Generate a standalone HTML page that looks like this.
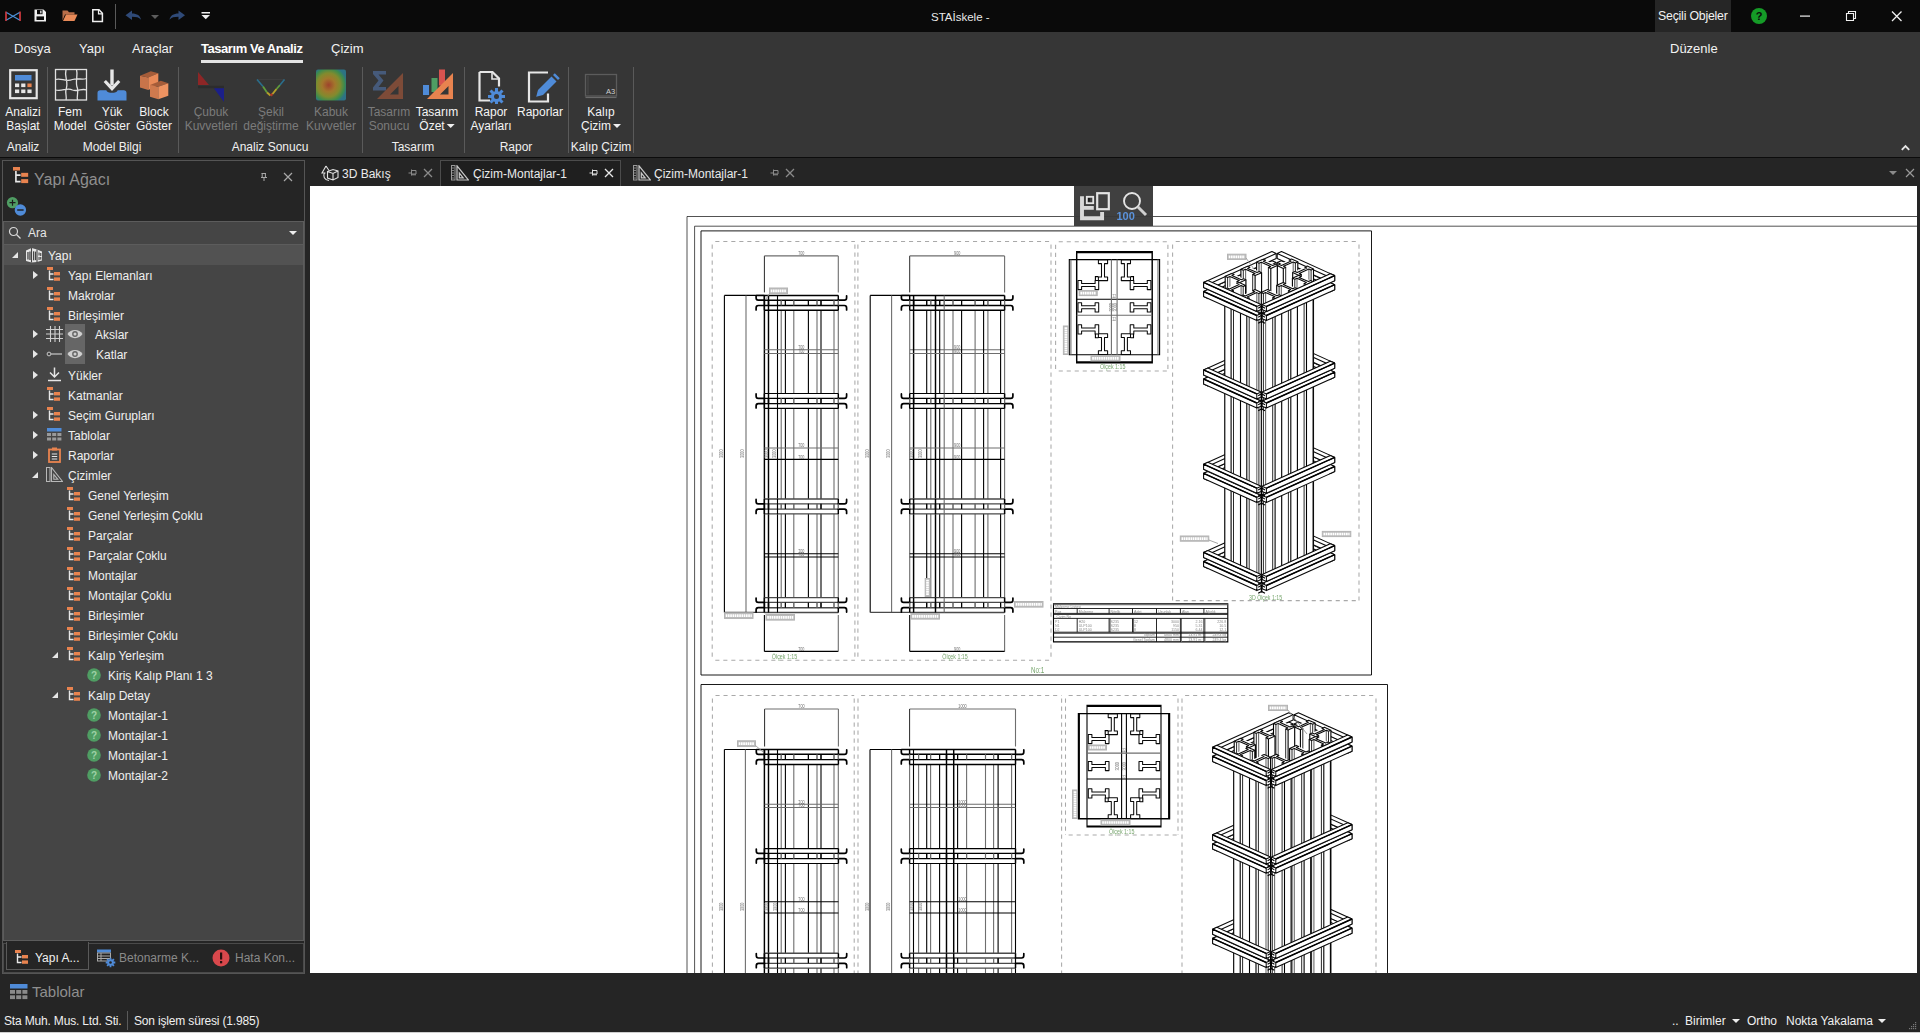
<!DOCTYPE html>
<html lang="tr">
<head>
<meta charset="utf-8">
<title>STAİskele</title>
<style>
*{box-sizing:border-box;margin:0;padding:0}
html,body{width:1920px;height:1033px;overflow:hidden;background:#252525;font-family:"Liberation Sans",sans-serif;font-size:12px;color:#f0f0f0}
.abs{position:absolute}
#titlebar{position:absolute;left:0;top:0;width:1920px;height:32px;background:#0a0a0a}
#ribbon{position:absolute;left:0;top:32px;width:1920px;height:125px;background:#363636}
#ribline{position:absolute;left:0;top:157px;width:1920px;height:1px;background:#0c0c0c}
.t{position:absolute;white-space:nowrap;line-height:14px}
.tab{position:absolute;top:41px;font-size:13px;line-height:15px;color:#f2f2f2;white-space:nowrap}
.rb{position:absolute;top:105px;text-align:center;font-size:12px;line-height:14px;color:#f4f4f4;white-space:nowrap;transform:translateX(-50%)}
.rb.dis{color:#7b7b7b}
.gl{position:absolute;top:140px;text-align:center;font-size:12px;line-height:14px;color:#f0f0f0;white-space:nowrap;transform:translateX(-50%)}
.sep{position:absolute;top:67px;width:1px;height:86px;background:#5a5a5a}
.ico{position:absolute}
#lpanel{position:absolute;left:2px;top:160px;width:303px;height:814px;border:1px solid #555;background:#252525}
#tree{position:absolute;left:3px;top:245px;width:301px;height:696px;background:#454545;border-left:1px solid #5c5c5c;border-right:1px solid #5c5c5c;border-bottom:1px solid #5c5c5c}
.tr{position:absolute;font-size:12px;line-height:14px;color:#f0f0f0;white-space:nowrap}
.arr{position:absolute;width:0;height:0}
.arr.c{border-left:5px solid #e6e6e6;border-top:4px solid transparent;border-bottom:4px solid transparent}
.arr.o{border-bottom:6px solid #e6e6e6;border-left:6px solid transparent}
#canvas{position:absolute;left:310px;top:186px;width:1607px;height:787px;background:#fff;overflow:hidden}
.dt{position:absolute;top:167px;font-size:12px;line-height:14px;color:#eaeaea;white-space:nowrap}
</style>
</head>
<body>
<div id="titlebar"></div><div id="ribbon"></div><div id="ribline"></div>
<svg class="ico" style="left:0;top:0" width="230" height="31" viewBox="0 0 230 31">
<path d="M6 11.5V21M20 11.5V21" stroke="#c8373b" stroke-width="1.8"/><path d="M6.5 12.5L19.5 20M6.5 20L19.5 12.5" stroke="#4c8fd6" stroke-width="1.3"/>
<path d="M34.5 9.5h9l2.5 2.5v9.5h-11.5z" fill="#f0f0f0"/><rect x="37" y="10" width="5.5" height="4.2" fill="#0a0a0a"/><rect x="40.2" y="10.6" width="1.3" height="2.8" fill="#f0f0f0"/><rect x="36.5" y="16.4" width="7.5" height="3.6" fill="#0a0a0a"/>
<path d="M62.5 10.5h5l1.5 1.8h5.5v2.2h-9.5l-2.5 6z" fill="#b96e49"/><path d="M66 14.5h11.5l-3 6.5h-11.5z" fill="#e98a58"/>
<path d="M92.8 9.8h6.2l3.4 3.4v8.3h-9.6z" fill="none" stroke="#f0f0f0" stroke-width="1.5"/><path d="M98.5 9.8v4h4" fill="none" stroke="#f0f0f0" stroke-width="1.2"/>
<rect x="115" y="4" width="1" height="25" fill="#5a5a5a"/>
<path d="M125.5 15.2l6.5-4.8v3c5 0 8.5 2.2 9 6.4c-2-2.4-4.6-3-9-3v3.2z" fill="#2f4a78"/>
<path d="M151 15h8l-4 4z" fill="#5c5c5c"/>
<path d="M185 15.2l-6.5-4.8v3c-5 0-8.500 2.200-9 6.400c2-2.400 4.600-3 9-3v3.200z" fill="#2f4a78"/>
<rect x="201.500" y="12" width="8.5" height="1.5" fill="#f0f0f0"/><path d="M201.500 15h8.500l-4.250 4.200z" fill="#f0f0f0"/>
</svg>
<div class="t" style="left:931px;top:10px;font-size:11.5px;color:#e8e8e8">STAİskele -</div>
<div class="abs" style="left:1655px;top:0;width:76px;height:32px;background:#262626"></div>
<div class="t" style="left:1658px;top:9px;font-size:12.3px;line-height:15px;letter-spacing:-0.2px;color:#f2f2f2">Seçili Objeler</div>
<svg class="ico" style="left:1740px;top:0" width="180" height="31" viewBox="0 0 180 31">
<circle cx="19" cy="16" r="8" fill="#159b27"/><text x="19" y="20" font-family="Liberation Sans" font-size="11" font-weight="bold" fill="#0a0a0a" text-anchor="middle">?</text>
<rect x="60" y="15.500" width="10" height="1.2" fill="#f0f0f0"/>
<path d="M106.500 13.500h7v7h-7z M108.500 13.500v-2h7v7h-2" fill="none" stroke="#f0f0f0" stroke-width="1.1"/>
<path d="M152 11.500l9.500 9.500M161.500 11.500l-9.500 9.500" stroke="#f0f0f0" stroke-width="1.3"/>
</svg>
<div class="tab" style="left:14px;">Dosya</div>
<div class="tab" style="left:79px;">Yapı</div>
<div class="tab" style="left:132px;">Araçlar</div>
<div class="tab" style="left:201px;font-weight:bold;letter-spacing:-0.45px;color:#fff;">Tasarım Ve Analiz</div>
<div class="tab" style="left:331px;">Çizim</div>
<div class="tab" style="left:1670px;">Düzenle</div>
<div class="abs" style="left:201px;top:60px;width:102px;height:3px;background:#e4e4e4"></div>
<div class="sep" style="left:47px"></div>
<div class="sep" style="left:178px"></div>
<div class="sep" style="left:362px"></div>
<div class="sep" style="left:464px"></div>
<div class="sep" style="left:568px"></div>
<div class="sep" style="left:633px"></div>
<div class="rb" style="left:23px">Analizi<br>Başlat</div>
<div class="rb" style="left:70px">Fem<br>Model</div>
<div class="rb" style="left:112px">Yük<br>Göster</div>
<div class="rb" style="left:154px">Block<br>Göster</div>
<div class="rb dis" style="left:211px">Çubuk<br>Kuvvetleri</div>
<div class="rb dis" style="left:271px">Şekil<br>değiştirme</div>
<div class="rb dis" style="left:331px">Kabuk<br>Kuvvetler</div>
<div class="rb dis" style="left:389px">Tasarım<br>Sonucu</div>
<div class="rb" style="left:437px">Tasarım<br>Özet<span style="display:inline-block;width:0;height:0;border-top:4px solid #f0f0f0;border-left:4px solid transparent;border-right:4px solid transparent;margin-left:2px;vertical-align:2px"></span></div>
<div class="rb" style="left:491px">Rapor<br>Ayarları</div>
<div class="rb" style="left:540px">Raporlar</div>
<div class="rb" style="left:601px">Kalıp<br>Çizim<span style="display:inline-block;width:0;height:0;border-top:4px solid #f0f0f0;border-left:4px solid transparent;border-right:4px solid transparent;margin-left:2px;vertical-align:2px"></span></div>
<div class="gl" style="left:23px">Analiz</div>
<div class="gl" style="left:112px">Model Bilgi</div>
<div class="gl" style="left:270px">Analiz Sonucu</div>
<div class="gl" style="left:413px">Tasarım</div>
<div class="gl" style="left:516px">Rapor</div>
<div class="gl" style="left:601px">Kalıp Çizim</div>
<svg class="ico" style="left:0;top:64px" width="640" height="40" viewBox="0 64 640 40">
<!-- analizi baslat -->
<rect x="10.200" y="70.200" width="26.500" height="28" fill="none" stroke="#e6e6e6" stroke-width="2.200"/>
<rect x="15" y="75" width="16.500" height="5.500" fill="#4f8bd8"/>
<g fill="#e6e6e6"><rect x="15" y="83.500" width="4.200" height="3.600"/><rect x="21.200" y="83.500" width="4.200" height="3.600"/><rect x="15" y="89.500" width="4.200" height="3.600"/><rect x="21.200" y="89.500" width="4.200" height="3.600"/><rect x="27.400" y="89.500" width="4.200" height="3.600"/></g><rect x="27.400" y="83.500" width="4.200" height="3.600" fill="#e8834f"/>
<!-- fem model -->
<g fill="none" stroke="#e0e0e0" stroke-width="1.300"><rect x="55.500" y="69.500" width="31" height="30.500"/><path d="M66 69.500c-2 8 3 12 0 20c-1 4 1 7 0 10.500M76.500 69.500c2 7-2 12 1 19c1 4-1 8 0 11.500M55.500 79.500c6-2 10 3 17 0c6-2 9 1 14-1M55.500 90c7 2 11-3 17 0c6 2 9-2 14 0"/></g>
<!-- yuk goster -->
<path d="M112 69.500v16" stroke="#e6e6e6" stroke-width="3.400" fill="none"/><path d="M104.800 81l7.200 7.600l7.200-7.600" stroke="#e6e6e6" stroke-width="3.200" fill="none"/>
<path d="M97.500 93c0-1.800 1-2.800 2.800-2.800h6c1 3.500 10.400 3.500 11.400 0h6c1.800 0 2.800 1 2.800 2.800v7.500h-29z" fill="#4f8bd8"/>
<!-- block goster -->
<path d="M140 75.800l8.300 1.700v12.500l-8.300-2.500z" fill="#c8744a"/><path d="M140 75.800l10.800-4.500l7.500 2l-10 4.200z" fill="#a55c39"/><path d="M148.300 77.500l10-4.200v11.700l-10 5z" fill="#e98a58"/>
<path d="M150 85l8.300 1.700v12.500l-8.300-2.500z" fill="#cf7a4e"/><path d="M150 85l10.800-4.200l7.500 2.500l-10 3.400z" fill="#a55c39"/><path d="M158.300 86.700l10-3.400v12.500l-10 3.400z" fill="#ee9361"/>
<!-- cubuk kuvvetleri -->
<path d="M198 72l11 13h-11z" fill="#8d2626"/><path d="M213 87h11v15z" fill="#1b1f8a"/><path d="M198 87h26" stroke="#2c2c2c" stroke-width="2.500"/>
<!-- sekil degistirme -->
<g transform="translate(0 -3.500)">
<path d="M257 83h28" stroke="#3e3e3e" stroke-width="1"/>
<path d="M257 83l6 7" stroke="#2a6e8c" stroke-width="1.600" fill="none"/><path d="M263 90l4 6" stroke="#5f9c3c" stroke-width="1.800"/><path d="M267 96l3.500 3" stroke="#b5a02a" stroke-width="2"/><path d="M270.500 99l2-1.500" stroke="#b03a26" stroke-width="2.200"/><path d="M272.500 97.500l4-5" stroke="#b5a02a" stroke-width="2"/><path d="M276.500 92.500l3.500-4" stroke="#5f9c3c" stroke-width="1.800"/><path d="M280 88.500l4.500-5.500" stroke="#2a6e8c" stroke-width="1.600"/></g>
<!-- kabuk kuvvetler -->
<defs><radialGradient id="kg" cx="0.42" cy="0.5" r="0.62"><stop offset="0" stop-color="#b1452a"/><stop offset="0.35" stop-color="#b5832a"/><stop offset="0.62" stop-color="#8f9a2c"/><stop offset="0.85" stop-color="#3e9a52"/><stop offset="1" stop-color="#2b7d93"/></radialGradient></defs>
<rect x="316" y="69.500" width="30" height="31" rx="2" fill="url(#kg)" opacity="0.85"/>
<!-- tasarim sonucu (dis) -->
<path d="M373 71h13v3.500h-7.500l5 6l-5 6.500h7.500v3.500h-13v-3l5.500-7l-5.500-6.500z" fill="#465a7a"/>
<path d="M403 73v26h-26z M398.500 86v8.500h-8.500z" fill="#7d4b38" fill-rule="evenodd"/>
<!-- tasarim ozet -->
<rect x="423" y="85" width="6" height="10" fill="#4f8bd8"/><rect x="431.500" y="78" width="6" height="14" fill="#4f9d63"/><rect x="439" y="69.500" width="6" height="16" fill="#d9534f"/>
<path d="M453 73v26h-26z M448.500 86v8.500h-8.500z" fill="#e8834f" fill-rule="evenodd"/>
<!-- rapor ayarlari -->
<path d="M479.500 72h13l6.500 6.500v8M490 100.500h-10.500z M479.500 72v28.500h9" fill="none" stroke="#e6e6e6" stroke-width="2.200"/><path d="M492 72v7h7" fill="none" stroke="#e6e6e6" stroke-width="1.600"/>
<g transform="translate(496.500 96.500)"><circle r="5.600" fill="#4f8bd8"/><g stroke="#4f8bd8" stroke-width="3"><path d="M0 -8.500V8.500M-8.500 0H8.500M-6 -6L6 6M-6 6L6 -6"/></g><circle r="2.500" fill="#363636"/></g>
<!-- raporlar -->
<path d="M548 72.500h-19v29h19v-8" fill="none" stroke="#e6e6e6" stroke-width="2.200"/>
<path d="M551.500 76.500l5 5l-13.500 13.500l-6.800 1.800l1.800-6.800z" fill="#4f8bd8"/><path d="M553 75l1.800-1.800l5 5l-1.800 1.800z" fill="#4f8bd8"/>
<!-- kalip cizim -->
<rect x="585.500" y="74.500" width="31" height="21.500" fill="none" stroke="#5c5c5c" stroke-width="1.300"/><path d="M585.500 97.500h31" stroke="#6a6a6a" stroke-width="1.200"/><path d="M588 76v18.500" stroke="#4a4a4a" stroke-width="1"/>
<text x="606" y="94" font-family="Liberation Sans" font-size="7.500" fill="#d0d0d0">A3</text>
</svg>
<svg class="ico" style="left:1898px;top:142px" width="14" height="10" viewBox="0 0 14 10"><path d="M3.800 7.800l3.700-3.700l3.700 3.700" stroke="#e6e6e6" stroke-width="1.900" fill="none"/></svg>
<div id="lpanel"></div>
<svg class="ico" style="left:13px;top:167px" width="17.500" height="18.700" viewBox="0 0 15 16"><rect x="0" y="0" width="6" height="3" fill="#e8834f"/><rect x="7" y="5" width="6" height="3.4" fill="#e8834f"/><rect x="7" y="10.4" width="6" height="3.4" fill="#e8834f"/><path d="M2.5 3.5V12.5H6.5M2.5 7H6.5" stroke="#e8e8e8" stroke-width="1.4" fill="none"/></svg>
<div class="t" style="left:34px;top:170.500px;font-size:16px;line-height:18px;color:#8f8f8f">Yapı Ağacı</div>
<svg class="ico" style="left:255px;top:168px" width="45" height="18" viewBox="0 0 45 18"><path d="M6.500 5.500h4.500M7.200 5.500v4h3.200v-4M6 9.500h6M9 9.500v3.500" stroke="#a8a8a8" stroke-width="1" fill="none"/><path d="M29 5l8 8M37 5l-8 8" stroke="#a8a8a8" stroke-width="1.200"/></svg>
<svg class="ico" style="left:6px;top:196px" width="22" height="22" viewBox="0 0 22 22"><circle cx="6.500" cy="6.700" r="5.600" fill="#4f9d63"/><path d="M3.500 6.700h6M6.500 3.700v6" stroke="#1c1c1c" stroke-width="1.200"/><circle cx="14.400" cy="14" r="5.700" fill="#4f8bd8"/><path d="M11.200 14h6.400" stroke="#1c1c1c" stroke-width="1.400"/></svg>
<div class="abs" style="left:3px;top:221px;width:301px;height:24px;background:#454545;border:1px solid #5c5c5c"></div>
<svg class="ico" style="left:8px;top:226px" width="14" height="14" viewBox="0 0 14 14"><circle cx="5.500" cy="5.500" r="4" stroke="#d8d8d8" stroke-width="1.200" fill="none"/><path d="M8.500 8.500l4 4" stroke="#d8d8d8" stroke-width="1.300"/></svg>
<div class="t" style="left:28px;top:226px;font-size:12px;color:#e6e6e6">Ara</div>
<div class="abs" style="left:289px;top:231px;width:0;height:0;border-top:4px solid #eee;border-left:4px solid transparent;border-right:4px solid transparent"></div>
<div id="tree"></div>
<div class="abs" style="left:4px;top:245px;width:299px;height:20px;background:#525252"></div>
<div class="arr o" style="left:12px;top:252px"></div>
<svg class="ico" style="left:25px;top:247px" width="18" height="16" viewBox="0 0 18 16"><path d="M1 3.500l5.500-2.500l5.500 1.500l5 2v9l-5 1.500l-5.500 0.500l-5.500-1.500z" fill="#e6e6e6"/><g stroke="#454545" stroke-width="1.100"><path d="M6.500 1v14.500M12 2.500v13"/></g><g fill="#454545"><rect x="2.300" y="5" width="1.300" height="7.500"/><rect x="4.300" y="4.500" width="1.300" height="8.500"/><rect x="8" y="4.300" width="1.200" height="9"/><rect x="9.900" y="4.600" width="1.200" height="8.500"/><rect x="13.500" y="5.500" width="1.100" height="3"/><rect x="15.200" y="6" width="1.100" height="3"/><rect x="13.500" y="10" width="1.100" height="3"/><rect x="15.200" y="10" width="1.100" height="2.600"/></g></svg>
<div class="tr" style="left:48px;top:249px">Yapı</div>
<div class="arr c" style="left:33px;top:271px"></div>
<svg class="ico" style="left:47px;top:267px" width="15" height="16" viewBox="0 0 15 16"><rect x="0" y="0" width="6" height="3" fill="#e8834f"/><rect x="7" y="5" width="6" height="3.4" fill="#e8834f"/><rect x="7" y="10.4" width="6" height="3.4" fill="#e8834f"/><path d="M2.5 3.5V12.5H6.5M2.5 7H6.5" stroke="#e8e8e8" stroke-width="1.4" fill="none"/></svg>
<div class="tr" style="left:68px;top:269px">Yapı Elemanları</div>
<svg class="ico" style="left:47px;top:287px" width="15" height="16" viewBox="0 0 15 16"><rect x="0" y="0" width="6" height="3" fill="#e8834f"/><rect x="7" y="5" width="6" height="3.4" fill="#e8834f"/><rect x="7" y="10.4" width="6" height="3.4" fill="#e8834f"/><path d="M2.5 3.5V12.5H6.5M2.5 7H6.5" stroke="#e8e8e8" stroke-width="1.4" fill="none"/></svg>
<div class="tr" style="left:68px;top:289px">Makrolar</div>
<svg class="ico" style="left:47px;top:307px" width="15" height="16" viewBox="0 0 15 16"><rect x="0" y="0" width="6" height="3" fill="#e8834f"/><rect x="7" y="5" width="6" height="3.4" fill="#e8834f"/><rect x="7" y="10.4" width="6" height="3.4" fill="#e8834f"/><path d="M2.5 3.5V12.5H6.5M2.5 7H6.5" stroke="#e8e8e8" stroke-width="1.4" fill="none"/></svg>
<div class="tr" style="left:68px;top:309px">Birleşimler</div>
<div class="arr c" style="left:33px;top:330px"></div>
<svg class="ico" style="left:46px;top:326px" width="17" height="16" viewBox="0 0 17 16"><path d="M4.500 0v16M9 0v16M13.500 0v16M0 3.500h17M0 8h17M0 12.500h17" stroke="#d0d0d0" stroke-width="1.100"/></svg>
<div class="abs" style="left:65px;top:324px;width:20px;height:20px;background:#666"></div>
<svg class="ico" style="left:67px;top:329px" width="16" height="10" viewBox="0 0 16 10"><path d="M0.500 5c3-5.500 12-5.500 15 0c-3 5.500-12 5.500-15 0z" fill="#cfcfcf"/><circle cx="8" cy="5" r="2.900" fill="#666"/><circle cx="8" cy="5" r="1.500" fill="#cfcfcf"/></svg>
<div class="tr" style="left:95px;top:328px">Akslar</div>
<div class="arr c" style="left:33px;top:350px"></div>
<svg class="ico" style="left:46px;top:350px" width="17" height="8" viewBox="0 0 17 8"><circle cx="3" cy="4" r="1.900" stroke="#c8c8c8" stroke-width="1" fill="none"/><path d="M5 4h11" stroke="#c8c8c8" stroke-width="1.200"/></svg>
<div class="abs" style="left:65px;top:344px;width:20px;height:20px;background:#666"></div>
<svg class="ico" style="left:67px;top:349px" width="16" height="10" viewBox="0 0 16 10"><path d="M0.500 5c3-5.500 12-5.500 15 0c-3 5.500-12 5.500-15 0z" fill="#cfcfcf"/><circle cx="8" cy="5" r="2.900" fill="#666"/><circle cx="8" cy="5" r="1.500" fill="#cfcfcf"/></svg>
<div class="tr" style="left:96px;top:348px">Katlar</div>
<div class="arr c" style="left:33px;top:371px"></div>
<svg class="ico" style="left:47px;top:367px" width="15" height="15" viewBox="0 0 15 15"><path d="M7.500 0.500v9M3 5.500l4.500 4.500l4.500-4.500M1 13.500h13" stroke="#e6e6e6" stroke-width="1.500" fill="none"/></svg>
<div class="tr" style="left:68px;top:369px">Yükler</div>
<svg class="ico" style="left:47px;top:387px" width="15" height="16" viewBox="0 0 15 16"><rect x="0" y="0" width="6" height="3" fill="#e8834f"/><rect x="7" y="5" width="6" height="3.4" fill="#e8834f"/><rect x="7" y="10.4" width="6" height="3.4" fill="#e8834f"/><path d="M2.5 3.5V12.5H6.5M2.5 7H6.5" stroke="#e8e8e8" stroke-width="1.4" fill="none"/></svg>
<div class="tr" style="left:68px;top:389px">Katmanlar</div>
<div class="arr c" style="left:33px;top:411px"></div>
<svg class="ico" style="left:47px;top:407px" width="15" height="16" viewBox="0 0 15 16"><rect x="0" y="0" width="6" height="3" fill="#e8834f"/><rect x="7" y="5" width="6" height="3.4" fill="#e8834f"/><rect x="7" y="10.4" width="6" height="3.4" fill="#e8834f"/><path d="M2.5 3.5V12.5H6.5M2.5 7H6.5" stroke="#e8e8e8" stroke-width="1.4" fill="none"/></svg>
<div class="tr" style="left:68px;top:409px">Seçim Gurupları</div>
<div class="arr c" style="left:33px;top:431px"></div>
<svg class="ico" style="left:47px;top:428px" width="15" height="13" viewBox="0 0 15 13"><rect x="0" y="0" width="14.500" height="3.500" fill="#4f8bd8"/><g fill="#9a9a9a"><rect x="0" y="5" width="4" height="3"/><rect x="5.200" y="5" width="4" height="3"/><rect x="10.400" y="5" width="4" height="3"/><rect x="0" y="9.500" width="4" height="3"/><rect x="5.200" y="9.500" width="4" height="3"/><rect x="10.400" y="9.500" width="4" height="3"/></g></svg>
<div class="tr" style="left:68px;top:429px">Tablolar</div>
<div class="arr c" style="left:33px;top:451px"></div>
<svg class="ico" style="left:48px;top:447px" width="13" height="16" viewBox="0 0 13 16"><rect x="1" y="2.500" width="11" height="12.500" fill="none" stroke="#e8834f" stroke-width="1.800"/><rect x="4" y="0.500" width="5" height="3" fill="#e8834f"/><path d="M3.800 7h5.400M3.800 9.500h5.400M3.800 12h5.400" stroke="#e6e6e6" stroke-width="1.100"/></svg>
<div class="tr" style="left:68px;top:449px">Raporlar</div>
<div class="arr o" style="left:32px;top:472px"></div>
<svg class="ico" style="left:46px;top:467px" width="17" height="15" viewBox="0 0 17 15"><rect x="0.500" y="0.500" width="3.500" height="14" fill="none" stroke="#b8b8b8" stroke-width="1"/><path d="M5.500 0.500v14h11z M7.800 7.500v4.800h4z" fill="none" stroke="#b8b8b8" stroke-width="1.100"/></svg>
<div class="tr" style="left:68px;top:469px">Çizimler</div>
<svg class="ico" style="left:67px;top:487px" width="15" height="16" viewBox="0 0 15 16"><rect x="0" y="0" width="6" height="3" fill="#e8834f"/><rect x="7" y="5" width="6" height="3.4" fill="#e8834f"/><rect x="7" y="10.4" width="6" height="3.4" fill="#e8834f"/><path d="M2.5 3.5V12.5H6.5M2.5 7H6.5" stroke="#e8e8e8" stroke-width="1.4" fill="none"/></svg>
<div class="tr" style="left:88px;top:489px">Genel Yerleşim</div>
<svg class="ico" style="left:67px;top:507px" width="15" height="16" viewBox="0 0 15 16"><rect x="0" y="0" width="6" height="3" fill="#e8834f"/><rect x="7" y="5" width="6" height="3.4" fill="#e8834f"/><rect x="7" y="10.4" width="6" height="3.4" fill="#e8834f"/><path d="M2.5 3.5V12.5H6.5M2.5 7H6.5" stroke="#e8e8e8" stroke-width="1.4" fill="none"/></svg>
<div class="tr" style="left:88px;top:509px">Genel Yerleşim Çoklu</div>
<svg class="ico" style="left:67px;top:527px" width="15" height="16" viewBox="0 0 15 16"><rect x="0" y="0" width="6" height="3" fill="#e8834f"/><rect x="7" y="5" width="6" height="3.4" fill="#e8834f"/><rect x="7" y="10.4" width="6" height="3.4" fill="#e8834f"/><path d="M2.5 3.5V12.5H6.5M2.5 7H6.5" stroke="#e8e8e8" stroke-width="1.4" fill="none"/></svg>
<div class="tr" style="left:88px;top:529px">Parçalar</div>
<svg class="ico" style="left:67px;top:547px" width="15" height="16" viewBox="0 0 15 16"><rect x="0" y="0" width="6" height="3" fill="#e8834f"/><rect x="7" y="5" width="6" height="3.4" fill="#e8834f"/><rect x="7" y="10.4" width="6" height="3.4" fill="#e8834f"/><path d="M2.5 3.5V12.5H6.5M2.5 7H6.5" stroke="#e8e8e8" stroke-width="1.4" fill="none"/></svg>
<div class="tr" style="left:88px;top:549px">Parçalar Çoklu</div>
<svg class="ico" style="left:67px;top:567px" width="15" height="16" viewBox="0 0 15 16"><rect x="0" y="0" width="6" height="3" fill="#e8834f"/><rect x="7" y="5" width="6" height="3.4" fill="#e8834f"/><rect x="7" y="10.4" width="6" height="3.4" fill="#e8834f"/><path d="M2.5 3.5V12.5H6.5M2.5 7H6.5" stroke="#e8e8e8" stroke-width="1.4" fill="none"/></svg>
<div class="tr" style="left:88px;top:569px">Montajlar</div>
<svg class="ico" style="left:67px;top:587px" width="15" height="16" viewBox="0 0 15 16"><rect x="0" y="0" width="6" height="3" fill="#e8834f"/><rect x="7" y="5" width="6" height="3.4" fill="#e8834f"/><rect x="7" y="10.4" width="6" height="3.4" fill="#e8834f"/><path d="M2.5 3.5V12.5H6.5M2.5 7H6.5" stroke="#e8e8e8" stroke-width="1.4" fill="none"/></svg>
<div class="tr" style="left:88px;top:589px">Montajlar Çoklu</div>
<svg class="ico" style="left:67px;top:607px" width="15" height="16" viewBox="0 0 15 16"><rect x="0" y="0" width="6" height="3" fill="#e8834f"/><rect x="7" y="5" width="6" height="3.4" fill="#e8834f"/><rect x="7" y="10.4" width="6" height="3.4" fill="#e8834f"/><path d="M2.5 3.5V12.5H6.5M2.5 7H6.5" stroke="#e8e8e8" stroke-width="1.4" fill="none"/></svg>
<div class="tr" style="left:88px;top:609px">Birleşimler</div>
<svg class="ico" style="left:67px;top:627px" width="15" height="16" viewBox="0 0 15 16"><rect x="0" y="0" width="6" height="3" fill="#e8834f"/><rect x="7" y="5" width="6" height="3.4" fill="#e8834f"/><rect x="7" y="10.4" width="6" height="3.4" fill="#e8834f"/><path d="M2.5 3.5V12.5H6.5M2.5 7H6.5" stroke="#e8e8e8" stroke-width="1.4" fill="none"/></svg>
<div class="tr" style="left:88px;top:629px">Birleşimler Çoklu</div>
<div class="arr o" style="left:52px;top:652px"></div>
<svg class="ico" style="left:67px;top:647px" width="15" height="16" viewBox="0 0 15 16"><rect x="0" y="0" width="6" height="3" fill="#e8834f"/><rect x="7" y="5" width="6" height="3.4" fill="#e8834f"/><rect x="7" y="10.4" width="6" height="3.4" fill="#e8834f"/><path d="M2.5 3.5V12.5H6.5M2.5 7H6.5" stroke="#e8e8e8" stroke-width="1.4" fill="none"/></svg>
<div class="tr" style="left:88px;top:649px">Kalıp Yerleşim</div>
<svg class="ico" style="left:87px;top:668px" width="14" height="14" viewBox="0 0 14 14"><circle cx="7" cy="7" r="6.8" fill="#4f9d63"/><text x="7" y="10.6" font-family="Liberation Sans" font-size="10" font-weight="bold" fill="#9ed0a6" text-anchor="middle">?</text></svg>
<div class="tr" style="left:108px;top:669px">Kiriş Kalıp Planı 1 3</div>
<div class="arr o" style="left:52px;top:692px"></div>
<svg class="ico" style="left:67px;top:687px" width="15" height="16" viewBox="0 0 15 16"><rect x="0" y="0" width="6" height="3" fill="#e8834f"/><rect x="7" y="5" width="6" height="3.4" fill="#e8834f"/><rect x="7" y="10.4" width="6" height="3.4" fill="#e8834f"/><path d="M2.5 3.5V12.5H6.5M2.5 7H6.5" stroke="#e8e8e8" stroke-width="1.4" fill="none"/></svg>
<div class="tr" style="left:88px;top:689px">Kalıp Detay</div>
<svg class="ico" style="left:87px;top:708px" width="14" height="14" viewBox="0 0 14 14"><circle cx="7" cy="7" r="6.8" fill="#4f9d63"/><text x="7" y="10.6" font-family="Liberation Sans" font-size="10" font-weight="bold" fill="#9ed0a6" text-anchor="middle">?</text></svg>
<div class="tr" style="left:108px;top:709px">Montajlar-1</div>
<svg class="ico" style="left:87px;top:728px" width="14" height="14" viewBox="0 0 14 14"><circle cx="7" cy="7" r="6.8" fill="#4f9d63"/><text x="7" y="10.6" font-family="Liberation Sans" font-size="10" font-weight="bold" fill="#9ed0a6" text-anchor="middle">?</text></svg>
<div class="tr" style="left:108px;top:729px">Montajlar-1</div>
<svg class="ico" style="left:87px;top:748px" width="14" height="14" viewBox="0 0 14 14"><circle cx="7" cy="7" r="6.8" fill="#4f9d63"/><text x="7" y="10.6" font-family="Liberation Sans" font-size="10" font-weight="bold" fill="#9ed0a6" text-anchor="middle">?</text></svg>
<div class="tr" style="left:108px;top:749px">Montajlar-1</div>
<svg class="ico" style="left:87px;top:768px" width="14" height="14" viewBox="0 0 14 14"><circle cx="7" cy="7" r="6.8" fill="#4f9d63"/><text x="7" y="10.6" font-family="Liberation Sans" font-size="10" font-weight="bold" fill="#9ed0a6" text-anchor="middle">?</text></svg>
<div class="tr" style="left:108px;top:769px">Montajlar-2</div>
<div class="abs" style="left:3px;top:943px;width:301px;height:30px;border:1px solid #4a4a4a;background:#252525"></div>
<div class="abs" style="left:6px;top:942px;width:83px;height:28px;border:1px solid #5a5a5a;border-top:none;background:#252525"></div>
<svg class="ico" style="left:15px;top:950px" width="15" height="16" viewBox="0 0 15 16"><rect x="0" y="0" width="6" height="3" fill="#e8834f"/><rect x="7" y="5" width="6" height="3.4" fill="#e8834f"/><rect x="7" y="10.4" width="6" height="3.4" fill="#e8834f"/><path d="M2.5 3.5V12.5H6.5M2.5 7H6.5" stroke="#e8e8e8" stroke-width="1.4" fill="none"/></svg>
<div class="t" style="left:35px;top:951px;font-size:12px;color:#f0f0f0">Yapı A...</div>
<svg class="ico" style="left:96px;top:948px" width="20" height="20" viewBox="0 0 20 20"><rect x="1" y="1.500" width="14" height="3" fill="#4f8bd8"/><g stroke="#a8a8a8" stroke-width="1" fill="none"><rect x="1.500" y="5" width="13" height="8"/><path d="M1.500 8h13M1.500 10.500h13M5 5v8"/></g><g transform="translate(14.500 14.500)"><circle r="3.200" fill="#4f8bd8"/><g stroke="#4f8bd8" stroke-width="1.800"><path d="M0 -4.800V4.800M-4.800 0H4.800M-3.400 -3.400L3.400 3.400M-3.400 3.400L3.400 -3.400"/></g><circle r="1.300" fill="#252525"/></g></svg>
<div class="t" style="left:119px;top:951px;font-size:12px;color:#8a8a8a">Betonarme K...</div>
<svg class="ico" style="left:212px;top:949px" width="18" height="18" viewBox="0 0 18 18"><circle cx="9" cy="9" r="8.500" fill="#d9484c"/><rect x="8" y="3.500" width="2.200" height="7" fill="#2a1010"/><rect x="8" y="12" width="2.200" height="2.300" fill="#2a1010"/></svg>
<div class="t" style="left:235px;top:951px;font-size:12px;color:#8a8a8a">Hata Kon...</div>
<div class="abs" style="left:440px;top:160px;width:181px;height:26px;border:1px solid #4c4c4c;border-bottom:none;background:#1f1f1f"></div>
<svg class="ico" style="left:320px;top:163px" width="20" height="20" viewBox="0 0 20 20"><g fill="none" stroke="#e0e0e0" stroke-width="1.100"><path d="M6 3l-4 7h3.500M6 3l3 4.500"/><path d="M7.500 8.500l5.500-2l5 1.500v6.500l-5 2.500l-5.500-2z M7.500 8.500l5.500 2l5-2.500M13 10.500v6.500"/><path d="M4.500 10c-2 3 0 7 4.500 7.500"/></g></svg>
<div class="dt" style="left:342px">3D Bakış</div>
<svg class="ico" style="left:408px;top:166px" width="30" height="14" viewBox="0 0 30 14"><path d="M0.500 7h3M3.500 3.500v6M3.500 4.500h4.500v3.500h-4.500M3.500 8.800h4.500" stroke="#8a8a8a" stroke-width="1" fill="none"/><path d="M16 3l8 8M24 3l-8 8" stroke="#8a8a8a" stroke-width="1.300"/></svg>
<svg class="ico" style="left:451px;top:165px" width="18" height="16" viewBox="0 0 18 16"><rect x="0.500" y="0.500" width="3.500" height="14.500" fill="none" stroke="#9a9a9a" stroke-width="1"/><path d="M1 3h2M1 5.500h2M1 8h2M1 10.500h2M1 13h2" stroke="#9a9a9a" stroke-width="0.800"/><path d="M6 0.800v14.200h11.500z M8.300 8v4.800h3.900z" fill="none" stroke="#c8c8c8" stroke-width="1.200"/></svg>
<div class="dt" style="left:473px">Çizim-Montajlar-1</div>
<svg class="ico" style="left:589px;top:166px" width="30" height="14" viewBox="0 0 30 14"><path d="M0.500 7h3M3.500 3.500v6M3.500 4.500h4.500v3.500h-4.500M3.500 8.800h4.500" stroke="#e0e0e0" stroke-width="1" fill="none"/><path d="M16 3l8 8M24 3l-8 8" stroke="#e8e8e8" stroke-width="1.300"/></svg>
<svg class="ico" style="left:633px;top:165px" width="18" height="16" viewBox="0 0 18 16"><rect x="0.500" y="0.500" width="3.500" height="14.500" fill="none" stroke="#9a9a9a" stroke-width="1"/><path d="M1 3h2M1 5.500h2M1 8h2M1 10.500h2M1 13h2" stroke="#9a9a9a" stroke-width="0.800"/><path d="M6 0.800v14.200h11.500z M8.300 8v4.800h3.900z" fill="none" stroke="#c8c8c8" stroke-width="1.200"/></svg>
<div class="dt" style="left:654px">Çizim-Montajlar-1</div>
<svg class="ico" style="left:770px;top:166px" width="30" height="14" viewBox="0 0 30 14"><path d="M0.500 7h3M3.500 3.500v6M3.500 4.500h4.500v3.500h-4.500M3.500 8.800h4.500" stroke="#8a8a8a" stroke-width="1" fill="none"/><path d="M16 3l8 8M24 3l-8 8" stroke="#8a8a8a" stroke-width="1.300"/></svg>
<div class="abs" style="left:1889px;top:171px;width:0;height:0;border-top:4px solid #8a8a8a;border-left:4px solid transparent;border-right:4px solid transparent"></div>
<svg class="ico" style="left:1905px;top:168px" width="10" height="10" viewBox="0 0 10 10"><path d="M1 1l8 8M9 1l-8 8" stroke="#9a9a9a" stroke-width="1.200"/></svg>
<svg class="ico" style="left:10px;top:984px" width="18" height="16" viewBox="0 0 18 16"><rect x="0" y="0" width="17.500" height="4.500" fill="#4f8bd8"/><g fill="#8a8a8a"><rect x="0" y="6" width="5" height="3.800"/><rect x="6.200" y="6" width="5" height="3.800"/><rect x="12.400" y="6" width="5" height="3.800"/><rect x="0" y="11.300" width="5" height="3.800"/><rect x="6.200" y="11.300" width="5" height="3.800"/><rect x="12.400" y="11.300" width="5" height="3.800"/></g></svg>
<div class="t" style="left:32px;top:983px;font-size:15px;line-height:18px;color:#8f8f8f">Tablolar</div>
<div class="t" style="left:4px;top:1014px;font-size:12px;letter-spacing:-0.17px;color:#f0f0f0">Sta Muh. Mus. Ltd. Sti.</div>
<div class="abs" style="left:127px;top:1011px;width:1px;height:19px;background:#5a5a5a"></div>
<div class="t" style="left:134px;top:1014px;font-size:12px;letter-spacing:-0.17px;color:#f0f0f0">Son işlem süresi (1.985)</div>
<div class="t" style="left:1672px;top:1014px;font-size:12px;color:#f0f0f0">..</div>
<div class="t" style="left:1685px;top:1014px;font-size:12px;color:#f0f0f0">Birimler</div>
<div class="abs" style="left:1732px;top:1019px;width:0;height:0;border-top:4px solid #eee;border-left:4px solid transparent;border-right:4px solid transparent"></div>
<div class="t" style="left:1747px;top:1014px;font-size:12px;color:#f0f0f0">Ortho</div>
<div class="t" style="left:1786px;top:1014px;font-size:12px;color:#f0f0f0">Nokta Yakalama</div>
<div class="abs" style="left:1878px;top:1019px;width:0;height:0;border-top:4px solid #eee;border-left:4px solid transparent;border-right:4px solid transparent"></div>
<svg class="ico" style="left:1908px;top:1021px" width="10" height="10" viewBox="0 0 10 10"><g fill="#7a7a7a"><rect x="7" y="1" width="1.200" height="1.200"/><rect x="5" y="3" width="1.200" height="1.200"/><rect x="7" y="3" width="1.200" height="1.200"/><rect x="3" y="5" width="1.200" height="1.200"/><rect x="5" y="5" width="1.200" height="1.200"/><rect x="7" y="5" width="1.200" height="1.200"/><rect x="1" y="7" width="1.200" height="1.200"/><rect x="3" y="7" width="1.200" height="1.200"/><rect x="5" y="7" width="1.200" height="1.200"/><rect x="7" y="7" width="1.200" height="1.200"/></g></svg>
<div class="abs" style="left:0;top:1032px;width:1920px;height:1px;background:#cfcfcf"></div>
<div id="canvas">
<svg width="1607" height="787" viewBox="310 186 1607 787" style="position:absolute;left:0;top:0;will-change:transform" shape-rendering="auto"><style>
.k{stroke:#000;stroke-width:1.1;fill:none}
.kk{stroke:#000;stroke-width:1.45;fill:none}
.kb{stroke:#000;stroke-width:1.2;fill:none}
.kg{stroke:#4a4a4a;stroke-width:1.35;fill:none}
.hk{stroke:#000;stroke-width:1.7;fill:none;stroke-linecap:round;stroke-linejoin:round}
.k1{stroke:#111;stroke-width:0.9;fill:none}
.gr{stroke:#6e6e6e;stroke-width:1.1;fill:none}
.gy{stroke:#9a9a9a;stroke-width:0.9;fill:none}
.fr{stroke:#000;stroke-width:0.68;fill:none;stroke-linejoin:round}
.sh{stroke:#000;stroke-width:0.9;fill:none;stroke-linejoin:round}
.da{stroke:#a9a9a9;stroke-width:1.05;fill:none;stroke-dasharray:4.1 3.9;stroke-dashoffset:4.9}
.w{stroke:#0a0a0a;stroke-width:1.05;fill:#fff;stroke-linejoin:round}
.wf{stroke:none;fill:#fff}
.lb{stroke:#b4b4b4;stroke-width:1;fill:#bcbcbc}
.lt{stroke:#fff;stroke-width:2.7;fill:none;stroke-dasharray:1.7 0.55}
text{font-family:"Liberation Sans",sans-serif}
.gt{fill:#78a66e;font-size:7.5px}
.dm{fill:#707070;font-size:5.6px}
</style><path class="fr" d="M687.0 980.0L687.0 216.5L1925.0 216.5M694.6 980.0L694.6 226.2L1925.0 226.2"/>
<path class="sh" d="M701.0 230.9L1371.5 230.9L1371.5 675.0L701.0 675.0zM701.0 980.0L701.0 684.5L1387.5 684.5L1387.5 980.0"/>
<path class="da" d="M712.2 241.5L854.9 241.5M712.2 241.5L712.2 660.3M854.9 241.5L854.9 660.3M712.2 660.3L854.9 660.3M857.9 241.5L1051.0 241.5M857.9 241.5L857.9 660.3M1051.0 241.5L1051.0 660.3M857.9 660.3L1051.0 660.3M1055.6 241.7L1167.9 241.7M1055.6 241.7L1055.6 370.9M1167.9 241.7L1167.9 370.9M1055.6 370.9L1167.9 370.9M1172.6 241.5L1359.0 241.5M1172.6 241.5L1172.6 600.6M1359.0 241.5L1359.0 600.6M1172.6 600.6L1359.0 600.6M712.4 695.5L854.2 695.5M712.4 695.5L712.4 990.0M854.2 695.5L854.2 990.0M712.4 990.0L854.2 990.0M858.0 695.5L1061.6 695.5M858.0 695.5L858.0 990.0M1061.6 695.5L1061.6 990.0M858.0 990.0L1061.6 990.0M1065.5 695.5L1178.0 695.5M1065.5 695.5L1065.5 835.0M1178.0 695.5L1178.0 835.0M1065.5 835.0L1178.0 835.0M1182.0 695.5L1376.0 695.5M1182.0 695.5L1182.0 990.0M1376.0 695.5L1376.0 990.0M1182.0 990.0L1376.0 990.0"/>
<path class="k1" d="M764.4 255.9L764.4 292.4"/>
<path class="gr" d="M764.4 255.9L838.3 255.9M838.3 255.9L838.3 292.4"/>
<text class="dm" x="801.3" y="255.1" text-anchor="middle" textLength="6.3" lengthAdjust="spacingAndGlyphs">700</text>
<path class="kk" d="M764.4 295.4L764.4 612.4M768.5 295.4L768.5 612.4"/>
<path class="k" d="M777.5 295.4L777.5 612.4M785.4 295.4L785.4 612.4M808.4 295.4L808.4 612.4M821.0 295.4L821.0 612.4"/>
<path class="gr" d="M781.2 295.4L781.2 612.4M793.8 295.4L793.8 612.4M817.0 295.4L817.0 612.4M834.0 295.4L834.0 612.4M838.3 295.4L838.3 612.4M764.4 349.7L838.3 349.7"/>
<text class="dm" x="801.3" y="349.1" text-anchor="middle" textLength="6.3" lengthAdjust="spacingAndGlyphs">700</text>
<path class="gr" d="M764.4 353.5L838.3 353.5"/>
<text class="dm" x="801.3" y="352.9" text-anchor="middle" textLength="6.3" lengthAdjust="spacingAndGlyphs">700</text>
<path class="gr" d="M764.4 448.0L838.3 448.0"/>
<text class="dm" x="801.3" y="447.4" text-anchor="middle" textLength="6.3" lengthAdjust="spacingAndGlyphs">700</text>
<path class="k" d="M764.4 459.4L838.3 459.4"/>
<text class="dm" x="801.3" y="458.8" text-anchor="middle" textLength="6.3" lengthAdjust="spacingAndGlyphs">700</text>
<path class="k" d="M764.4 553.7L838.3 553.7"/>
<text class="dm" x="801.3" y="553.1" text-anchor="middle" textLength="6.3" lengthAdjust="spacingAndGlyphs">700</text>
<path class="k" d="M764.4 557.0L838.3 557.0"/>
<text class="dm" x="801.3" y="556.4" text-anchor="middle" textLength="6.3" lengthAdjust="spacingAndGlyphs">700</text>
<path class="k" d="M724.4 295.4L724.4 612.4M724.4 295.4L764.4 295.4"/>
<path class="gr" d="M746.0 295.4L746.0 612.4"/>
<path class="kg" d="M724.4 612.4L764.4 612.4"/>
<text class="dm" x="722.9" y="457.9" text-anchor="start" transform="rotate(-90 722.9 457.9)" textLength="8.4" lengthAdjust="spacingAndGlyphs">3000</text>
<text class="dm" x="744.5" y="457.9" text-anchor="start" transform="rotate(-90 744.5 457.9)" textLength="8.4" lengthAdjust="spacingAndGlyphs">3000</text>
<text class="dm" x="767.9" y="457.9" text-anchor="start" transform="rotate(-90 767.9 457.9)" textLength="8.4" lengthAdjust="spacingAndGlyphs">3000</text>
<text class="dm" x="776.4" y="457.9" text-anchor="start" transform="rotate(-90 776.4 457.9)" textLength="8.4" lengthAdjust="spacingAndGlyphs">3000</text>
<rect class="wf" x="764.4" y="295.4" width="73.89999999999998" height="4.8"/><rect class="wf" x="764.4" y="305.5" width="73.89999999999998" height="4.8"/>
<path class="kk" d="M764.4 295.4L838.3 295.4M764.4 300.2L838.3 300.2M764.4 305.5L838.3 305.5M764.4 310.3L838.3 310.3M764.4 295.4L764.4 300.2M764.4 305.5L764.4 310.3M838.3 295.4L838.3 300.2M838.3 305.5L838.3 310.3M756.1 295.4L764.4 295.4M764.4 295.4L764.4 310.3M768.5 295.4L768.5 310.3"/>
<path class="hk" d="M764.4 300.2H758.3Q756.1 300.2 756.1 297.8V295.8M764.4 305.5H758.3Q756.1 305.5 756.1 307.9V309.9M838.3 300.2H844.4Q846.6 300.2 846.6 297.8V295.8M838.3 305.5H844.4Q846.6 305.5 846.6 307.9V309.9"/>
<path class="k" d="M764.4 300.2L764.4 305.5M768.5 300.2L768.5 305.5M777.5 300.2L777.5 305.5M785.4 300.2L785.4 305.5M808.4 300.2L808.4 305.5M821.0 300.2L821.0 305.5M777.5 295.4L777.5 310.3"/>
<path class="gr" d="M781.2 300.2L781.2 305.5M793.8 300.2L793.8 305.5M817.0 300.2L817.0 305.5M834.0 300.2L834.0 305.5M838.3 300.2L838.3 305.5"/>
<rect class="wf" x="764.4" y="393.5" width="73.89999999999998" height="4.8"/><rect class="wf" x="764.4" y="403.6" width="73.89999999999998" height="4.8"/>
<path class="kb" d="M764.4 393.5L838.3 393.5M764.4 398.3L838.3 398.3M764.4 403.6L838.3 403.6M764.4 408.4L838.3 408.4"/>
<path class="kk" d="M764.4 393.5L764.4 398.3M764.4 403.6L764.4 408.4M838.3 393.5L838.3 398.3M838.3 403.6L838.3 408.4M764.4 393.5L764.4 408.4M768.5 393.5L768.5 408.4"/>
<path class="hk" d="M764.4 398.3H758.3Q756.1 398.3 756.1 395.9V393.9M764.4 403.6H758.3Q756.1 403.6 756.1 406.0V408.0M838.3 398.3H844.4Q846.6 398.3 846.6 395.9V393.9M838.3 403.6H844.4Q846.6 403.6 846.6 406.0V408.0"/>
<path class="k" d="M764.4 398.3L764.4 403.6M768.5 398.3L768.5 403.6M777.5 398.3L777.5 403.6M785.4 398.3L785.4 403.6M808.4 398.3L808.4 403.6M821.0 398.3L821.0 403.6M777.5 393.5L777.5 408.4"/>
<path class="gr" d="M781.2 398.3L781.2 403.6M793.8 398.3L793.8 403.6M817.0 398.3L817.0 403.6M834.0 398.3L834.0 403.6M838.3 398.3L838.3 403.6"/>
<rect class="wf" x="764.4" y="499.0" width="73.89999999999998" height="4.8"/><rect class="wf" x="764.4" y="509.1" width="73.89999999999998" height="4.8"/>
<path class="kg" d="M764.4 499.0L838.3 499.0M764.4 503.8L838.3 503.8M764.4 509.1L838.3 509.1M764.4 513.9L838.3 513.9"/>
<path class="kk" d="M764.4 499.0L764.4 503.8M764.4 509.1L764.4 513.9M838.3 499.0L838.3 503.8M838.3 509.1L838.3 513.9M764.4 499.0L764.4 513.9M768.5 499.0L768.5 513.9"/>
<path class="hk" d="M764.4 503.8H758.3Q756.1 503.8 756.1 501.4V499.4M764.4 509.1H758.3Q756.1 509.1 756.1 511.5V513.5M838.3 503.8H844.4Q846.6 503.8 846.6 501.4V499.4M838.3 509.1H844.4Q846.6 509.1 846.6 511.5V513.5"/>
<path class="k" d="M764.4 503.8L764.4 509.1M768.5 503.8L768.5 509.1M777.5 503.8L777.5 509.1M785.4 503.8L785.4 509.1M808.4 503.8L808.4 509.1M821.0 503.8L821.0 509.1M777.5 499.0L777.5 513.9"/>
<path class="gr" d="M781.2 503.8L781.2 509.1M793.8 503.8L793.8 509.1M817.0 503.8L817.0 509.1M834.0 503.8L834.0 509.1M838.3 503.8L838.3 509.1"/>
<rect class="wf" x="764.4" y="597.6" width="73.89999999999998" height="4.8"/><rect class="wf" x="764.4" y="607.7" width="73.89999999999998" height="4.8"/>
<path class="kg" d="M764.4 597.6L838.3 597.6M764.4 602.4L838.3 602.4M764.4 607.7L838.3 607.7M764.4 612.5L838.3 612.5"/>
<path class="kk" d="M764.4 597.6L764.4 602.4M764.4 607.7L764.4 612.5M838.3 597.6L838.3 602.4M838.3 607.7L838.3 612.5M764.4 597.6L764.4 612.5M768.5 597.6L768.5 612.5"/>
<path class="hk" d="M764.4 602.4H758.3Q756.1 602.4 756.1 600.0V598.0M764.4 607.7H758.3Q756.1 607.7 756.1 610.1V612.1M838.3 602.4H844.4Q846.6 602.4 846.6 600.0V598.0M838.3 607.7H844.4Q846.6 607.7 846.6 610.1V612.1"/>
<path class="k" d="M764.4 602.4L764.4 607.7M768.5 602.4L768.5 607.7M777.5 602.4L777.5 607.7M785.4 602.4L785.4 607.7M808.4 602.4L808.4 607.7M821.0 602.4L821.0 607.7M777.5 597.6L777.5 612.5M764.4 614.9L764.4 651.4M764.4 651.4L838.3 651.4"/>
<path class="gr" d="M781.2 602.4L781.2 607.7M793.8 602.4L793.8 607.7M817.0 602.4L817.0 607.7M834.0 602.4L834.0 607.7M838.3 602.4L838.3 607.7M838.3 614.9L838.3 651.4"/>
<text class="dm" x="801.3" y="650.6" text-anchor="middle" textLength="6.3" lengthAdjust="spacingAndGlyphs">700</text>
<path class="k1" d="M909.7 255.9L909.7 292.4"/>
<path class="gr" d="M909.7 255.9L1004.6 255.9M1004.6 255.9L1004.6 292.4"/>
<text class="dm" x="957.2" y="255.1" text-anchor="middle" textLength="6.3" lengthAdjust="spacingAndGlyphs">900</text>
<path class="gr" d="M909.7 295.4L909.7 612.4M930.8 295.4L930.8 612.4M944.2 295.4L944.2 612.4M953.0 295.4L953.0 612.4M975.1 295.4L975.1 612.4M987.9 295.4L987.9 612.4M1004.6 295.4L1004.6 612.4M909.7 349.7L1004.6 349.7"/>
<path class="kk" d="M913.6 295.4L913.6 612.4M935.5 295.4L935.5 612.4"/>
<path class="k" d="M926.7 295.4L926.7 612.4M939.7 295.4L939.7 612.4M961.6 295.4L961.6 612.4M983.6 295.4L983.6 612.4M1000.6 295.4L1000.6 612.4"/>
<text class="dm" x="957.2" y="349.1" text-anchor="middle" textLength="6.3" lengthAdjust="spacingAndGlyphs">900</text>
<path class="gr" d="M909.7 353.5L1004.6 353.5"/>
<text class="dm" x="957.2" y="352.9" text-anchor="middle" textLength="6.3" lengthAdjust="spacingAndGlyphs">900</text>
<path class="gr" d="M909.7 448.0L1004.6 448.0"/>
<text class="dm" x="957.2" y="447.4" text-anchor="middle" textLength="6.3" lengthAdjust="spacingAndGlyphs">900</text>
<path class="k" d="M909.7 459.4L1004.6 459.4"/>
<text class="dm" x="957.2" y="458.8" text-anchor="middle" textLength="6.3" lengthAdjust="spacingAndGlyphs">900</text>
<path class="k" d="M909.7 553.7L1004.6 553.7"/>
<text class="dm" x="957.2" y="553.1" text-anchor="middle" textLength="6.3" lengthAdjust="spacingAndGlyphs">900</text>
<path class="k" d="M909.7 557.0L1004.6 557.0"/>
<text class="dm" x="957.2" y="556.4" text-anchor="middle" textLength="6.3" lengthAdjust="spacingAndGlyphs">900</text>
<path class="k" d="M870.2 295.4L870.2 612.4M870.2 295.4L909.7 295.4"/>
<path class="gr" d="M891.6 295.4L891.6 612.4"/>
<path class="kg" d="M870.2 612.4L909.7 612.4"/>
<text class="dm" x="868.7" y="457.9" text-anchor="start" transform="rotate(-90 868.7 457.9)" textLength="8.4" lengthAdjust="spacingAndGlyphs">3000</text>
<text class="dm" x="890.1" y="457.9" text-anchor="start" transform="rotate(-90 890.1 457.9)" textLength="8.4" lengthAdjust="spacingAndGlyphs">3000</text>
<text class="dm" x="913.2" y="457.9" text-anchor="start" transform="rotate(-90 913.2 457.9)" textLength="8.4" lengthAdjust="spacingAndGlyphs">3000</text>
<text class="dm" x="921.7" y="457.9" text-anchor="start" transform="rotate(-90 921.7 457.9)" textLength="8.4" lengthAdjust="spacingAndGlyphs">3000</text>
<rect class="wf" x="909.7" y="295.4" width="94.89999999999998" height="4.8"/><rect class="wf" x="909.7" y="305.5" width="94.89999999999998" height="4.8"/>
<path class="kk" d="M909.7 295.4L1004.6 295.4M909.7 300.2L1004.6 300.2M909.7 305.5L1004.6 305.5M909.7 310.3L1004.6 310.3M909.7 295.4L909.7 300.2M909.7 305.5L909.7 310.3M1004.6 295.4L1004.6 300.2M1004.6 305.5L1004.6 310.3M901.4 295.4L909.7 295.4M913.6 295.4L913.6 310.3M935.5 295.4L935.5 310.3"/>
<path class="hk" d="M909.7 300.2H903.6Q901.4 300.2 901.4 297.8V295.8M909.7 305.5H903.6Q901.4 305.5 901.4 307.9V309.9M1004.6 300.2H1010.7Q1012.9 300.2 1012.9 297.8V295.8M1004.6 305.5H1010.7Q1012.9 305.5 1012.9 307.9V309.9"/>
<path class="gr" d="M909.7 300.2L909.7 305.5M930.8 300.2L930.8 305.5M944.2 300.2L944.2 305.5M953.0 300.2L953.0 305.5M975.1 300.2L975.1 305.5M987.9 300.2L987.9 305.5M1004.6 300.2L1004.6 305.5M944.2 295.4L944.2 310.3"/>
<path class="k" d="M913.6 300.2L913.6 305.5M926.7 300.2L926.7 305.5M935.5 300.2L935.5 305.5M939.7 300.2L939.7 305.5M961.6 300.2L961.6 305.5M983.6 300.2L983.6 305.5M1000.6 300.2L1000.6 305.5"/>
<rect class="wf" x="909.7" y="393.5" width="94.89999999999998" height="4.8"/><rect class="wf" x="909.7" y="403.6" width="94.89999999999998" height="4.8"/>
<path class="kb" d="M909.7 393.5L1004.6 393.5M909.7 398.3L1004.6 398.3M909.7 403.6L1004.6 403.6M909.7 408.4L1004.6 408.4"/>
<path class="kk" d="M909.7 393.5L909.7 398.3M909.7 403.6L909.7 408.4M1004.6 393.5L1004.6 398.3M1004.6 403.6L1004.6 408.4M913.6 393.5L913.6 408.4M935.5 393.5L935.5 408.4"/>
<path class="hk" d="M909.7 398.3H903.6Q901.4 398.3 901.4 395.9V393.9M909.7 403.6H903.6Q901.4 403.6 901.4 406.0V408.0M1004.6 398.3H1010.7Q1012.9 398.3 1012.9 395.9V393.9M1004.6 403.6H1010.7Q1012.9 403.6 1012.9 406.0V408.0"/>
<path class="gr" d="M909.7 398.3L909.7 403.6M930.8 398.3L930.8 403.6M944.2 398.3L944.2 403.6M953.0 398.3L953.0 403.6M975.1 398.3L975.1 403.6M987.9 398.3L987.9 403.6M1004.6 398.3L1004.6 403.6M944.2 393.5L944.2 408.4"/>
<path class="k" d="M913.6 398.3L913.6 403.6M926.7 398.3L926.7 403.6M935.5 398.3L935.5 403.6M939.7 398.3L939.7 403.6M961.6 398.3L961.6 403.6M983.6 398.3L983.6 403.6M1000.6 398.3L1000.6 403.6"/>
<rect class="wf" x="909.7" y="499.0" width="94.89999999999998" height="4.8"/><rect class="wf" x="909.7" y="509.1" width="94.89999999999998" height="4.8"/>
<path class="kg" d="M909.7 499.0L1004.6 499.0M909.7 503.8L1004.6 503.8M909.7 509.1L1004.6 509.1M909.7 513.9L1004.6 513.9"/>
<path class="kk" d="M909.7 499.0L909.7 503.8M909.7 509.1L909.7 513.9M1004.6 499.0L1004.6 503.8M1004.6 509.1L1004.6 513.9M913.6 499.0L913.6 513.9M935.5 499.0L935.5 513.9"/>
<path class="hk" d="M909.7 503.8H903.6Q901.4 503.8 901.4 501.4V499.4M909.7 509.1H903.6Q901.4 509.1 901.4 511.5V513.5M1004.6 503.8H1010.7Q1012.9 503.8 1012.9 501.4V499.4M1004.6 509.1H1010.7Q1012.9 509.1 1012.9 511.5V513.5"/>
<path class="gr" d="M909.7 503.8L909.7 509.1M930.8 503.8L930.8 509.1M944.2 503.8L944.2 509.1M953.0 503.8L953.0 509.1M975.1 503.8L975.1 509.1M987.9 503.8L987.9 509.1M1004.6 503.8L1004.6 509.1M944.2 499.0L944.2 513.9"/>
<path class="k" d="M913.6 503.8L913.6 509.1M926.7 503.8L926.7 509.1M935.5 503.8L935.5 509.1M939.7 503.8L939.7 509.1M961.6 503.8L961.6 509.1M983.6 503.8L983.6 509.1M1000.6 503.8L1000.6 509.1"/>
<rect class="wf" x="909.7" y="597.6" width="94.89999999999998" height="4.8"/><rect class="wf" x="909.7" y="607.7" width="94.89999999999998" height="4.8"/>
<path class="kg" d="M909.7 597.6L1004.6 597.6M909.7 602.4L1004.6 602.4M909.7 607.7L1004.6 607.7M909.7 612.5L1004.6 612.5"/>
<path class="kk" d="M909.7 597.6L909.7 602.4M909.7 607.7L909.7 612.5M1004.6 597.6L1004.6 602.4M1004.6 607.7L1004.6 612.5M913.6 597.6L913.6 612.5M935.5 597.6L935.5 612.5"/>
<path class="hk" d="M909.7 602.4H903.6Q901.4 602.4 901.4 600.0V598.0M909.7 607.7H903.6Q901.4 607.7 901.4 610.1V612.1M1004.6 602.4H1010.7Q1012.9 602.4 1012.9 600.0V598.0M1004.6 607.7H1010.7Q1012.9 607.7 1012.9 610.1V612.1"/>
<path class="gr" d="M909.7 602.4L909.7 607.7M930.8 602.4L930.8 607.7M944.2 602.4L944.2 607.7M953.0 602.4L953.0 607.7M975.1 602.4L975.1 607.7M987.9 602.4L987.9 607.7M1004.6 602.4L1004.6 607.7M944.2 597.6L944.2 612.5M1004.6 614.9L1004.6 651.4"/>
<path class="k" d="M913.6 602.4L913.6 607.7M926.7 602.4L926.7 607.7M935.5 602.4L935.5 607.7M939.7 602.4L939.7 607.7M961.6 602.4L961.6 607.7M983.6 602.4L983.6 607.7M1000.6 602.4L1000.6 607.7M909.7 614.9L909.7 651.4M909.7 651.4L1004.6 651.4"/>
<text class="dm" x="957.2" y="650.6" text-anchor="middle" textLength="6.3" lengthAdjust="spacingAndGlyphs">900</text>
<path class="k1" d="M764.6 709.0L764.6 746.5"/>
<path class="gr" d="M764.6 709.0L838.4 709.0M838.4 709.0L838.4 746.5"/>
<text class="dm" x="801.5" y="708.2" text-anchor="middle" textLength="6.3" lengthAdjust="spacingAndGlyphs">700</text>
<path class="kk" d="M764.4 749.5L764.4 990.0M768.5 749.5L768.5 990.0"/>
<path class="k" d="M777.5 749.5L777.5 990.0M785.4 749.5L785.4 990.0M808.4 749.5L808.4 990.0M821.0 749.5L821.0 990.0"/>
<path class="gr" d="M781.2 749.5L781.2 990.0M793.8 749.5L793.8 990.0M817.0 749.5L817.0 990.0M834.0 749.5L834.0 990.0M838.3 749.5L838.3 990.0M764.6 804.2L838.4 804.2"/>
<text class="dm" x="801.5" y="803.6" text-anchor="middle" textLength="6.3" lengthAdjust="spacingAndGlyphs">700</text>
<path class="gr" d="M764.6 807.5L838.4 807.5"/>
<text class="dm" x="801.5" y="806.9" text-anchor="middle" textLength="6.3" lengthAdjust="spacingAndGlyphs">700</text>
<path class="k" d="M764.6 901.7L838.4 901.7"/>
<text class="dm" x="801.5" y="901.1" text-anchor="middle" textLength="6.3" lengthAdjust="spacingAndGlyphs">700</text>
<path class="k" d="M764.6 913.0L838.4 913.0"/>
<text class="dm" x="801.5" y="912.4" text-anchor="middle" textLength="6.3" lengthAdjust="spacingAndGlyphs">700</text>
<path class="k" d="M724.4 749.5L724.4 990.0M724.4 749.5L764.6 749.5"/>
<path class="gr" d="M745.4 749.5L745.4 990.0"/>
<text class="dm" x="722.9" y="911.0" text-anchor="start" transform="rotate(-90 722.9 911.0)" textLength="8.4" lengthAdjust="spacingAndGlyphs">3000</text>
<text class="dm" x="743.9" y="911.0" text-anchor="start" transform="rotate(-90 743.9 911.0)" textLength="8.4" lengthAdjust="spacingAndGlyphs">3000</text>
<text class="dm" x="768.1" y="911.0" text-anchor="start" transform="rotate(-90 768.1 911.0)" textLength="8.4" lengthAdjust="spacingAndGlyphs">3000</text>
<text class="dm" x="776.6" y="911.0" text-anchor="start" transform="rotate(-90 776.6 911.0)" textLength="8.4" lengthAdjust="spacingAndGlyphs">3000</text>
<rect class="wf" x="764.6" y="749.5" width="73.79999999999995" height="4.8"/><rect class="wf" x="764.6" y="759.6" width="73.79999999999995" height="4.8"/>
<path class="kk" d="M764.6 749.5L838.4 749.5M764.6 754.3L838.4 754.3M764.6 759.6L838.4 759.6M764.6 764.4L838.4 764.4M764.6 749.5L764.6 754.3M764.6 759.6L764.6 764.4M838.4 749.5L838.4 754.3M838.4 759.6L838.4 764.4M756.3 749.5L764.6 749.5M764.4 749.5L764.4 764.4M768.5 749.5L768.5 764.4"/>
<path class="hk" d="M764.6 754.3H758.5Q756.3 754.3 756.3 751.9V749.9M764.6 759.6H758.5Q756.3 759.6 756.3 762.0V764.0M838.4 754.3H844.5Q846.7 754.3 846.7 751.9V749.9M838.4 759.6H844.5Q846.7 759.6 846.7 762.0V764.0"/>
<path class="k" d="M764.4 754.3L764.4 759.6M768.5 754.3L768.5 759.6M777.5 754.3L777.5 759.6M785.4 754.3L785.4 759.6M808.4 754.3L808.4 759.6M821.0 754.3L821.0 759.6M777.5 749.5L777.5 764.4"/>
<path class="gr" d="M781.2 754.3L781.2 759.6M793.8 754.3L793.8 759.6M817.0 754.3L817.0 759.6M834.0 754.3L834.0 759.6M838.3 754.3L838.3 759.6"/>
<rect class="wf" x="764.6" y="848.6" width="73.79999999999995" height="4.8"/><rect class="wf" x="764.6" y="858.7" width="73.79999999999995" height="4.8"/>
<path class="kb" d="M764.6 848.6L838.4 848.6M764.6 853.4L838.4 853.4M764.6 858.7L838.4 858.7M764.6 863.5L838.4 863.5"/>
<path class="kk" d="M764.6 848.6L764.6 853.4M764.6 858.7L764.6 863.5M838.4 848.6L838.4 853.4M838.4 858.7L838.4 863.5M764.4 848.6L764.4 863.5M768.5 848.6L768.5 863.5"/>
<path class="hk" d="M764.6 853.4H758.5Q756.3 853.4 756.3 851.0V849.0M764.6 858.7H758.5Q756.3 858.7 756.3 861.1V863.1M838.4 853.4H844.5Q846.7 853.4 846.7 851.0V849.0M838.4 858.7H844.5Q846.7 858.7 846.7 861.1V863.1"/>
<path class="k" d="M764.4 853.4L764.4 858.7M768.5 853.4L768.5 858.7M777.5 853.4L777.5 858.7M785.4 853.4L785.4 858.7M808.4 853.4L808.4 858.7M821.0 853.4L821.0 858.7M777.5 848.6L777.5 863.5"/>
<path class="gr" d="M781.2 853.4L781.2 858.7M793.8 853.4L793.8 858.7M817.0 853.4L817.0 858.7M834.0 853.4L834.0 858.7M838.3 853.4L838.3 858.7"/>
<rect class="wf" x="764.6" y="953.2" width="73.79999999999995" height="4.8"/><rect class="wf" x="764.6" y="963.3000000000001" width="73.79999999999995" height="4.8"/>
<path class="kg" d="M764.6 953.2L838.4 953.2M764.6 958.0L838.4 958.0M764.6 963.3L838.4 963.3M764.6 968.1L838.4 968.1"/>
<path class="kk" d="M764.6 953.2L764.6 958.0M764.6 963.3L764.6 968.1M838.4 953.2L838.4 958.0M838.4 963.3L838.4 968.1M764.4 953.2L764.4 968.1M768.5 953.2L768.5 968.1"/>
<path class="hk" d="M764.6 958.0H758.5Q756.3 958.0 756.3 955.6V953.6M764.6 963.3H758.5Q756.3 963.3 756.3 965.7V967.7M838.4 958.0H844.5Q846.7 958.0 846.7 955.6V953.6M838.4 963.3H844.5Q846.7 963.3 846.7 965.7V967.7"/>
<path class="k" d="M764.4 958.0L764.4 963.3M768.5 958.0L768.5 963.3M777.5 958.0L777.5 963.3M785.4 958.0L785.4 963.3M808.4 958.0L808.4 963.3M821.0 958.0L821.0 963.3M777.5 953.2L777.5 968.1"/>
<path class="gr" d="M781.2 958.0L781.2 963.3M793.8 958.0L793.8 963.3M817.0 958.0L817.0 963.3M834.0 958.0L834.0 963.3M838.3 958.0L838.3 963.3M909.6 709.0L1015.5 709.0M1015.5 709.0L1015.5 746.5"/>
<path class="k1" d="M909.6 709.0L909.6 746.5"/>
<text class="dm" x="962.5" y="708.2" text-anchor="middle" textLength="8.4" lengthAdjust="spacingAndGlyphs">1000</text>
<path class="gr" d="M909.6 749.5L909.6 990.0M918.6 749.5L918.6 990.0M930.6 749.5L930.6 990.0M966.6 749.5L966.6 990.0M985.5 749.5L985.5 990.0M993.6 749.5L993.6 990.0M1011.6 749.5L1011.6 990.0M909.6 804.2L1015.5 804.2"/>
<path class="k" d="M913.5 749.5L913.5 990.0M926.7 749.5L926.7 990.0M939.6 749.5L939.6 990.0M957.6 749.5L957.6 990.0M998.1 749.5L998.1 990.0M1015.5 749.5L1015.5 990.0"/>
<path class="kk" d="M946.5 749.5L946.5 990.0M953.7 749.5L953.7 990.0"/>
<text class="dm" x="962.5" y="803.6" text-anchor="middle" textLength="8.4" lengthAdjust="spacingAndGlyphs">1000</text>
<path class="gr" d="M909.6 807.5L1015.5 807.5"/>
<text class="dm" x="962.5" y="806.9" text-anchor="middle" textLength="8.4" lengthAdjust="spacingAndGlyphs">1000</text>
<path class="k" d="M909.6 901.7L1015.5 901.7"/>
<text class="dm" x="962.5" y="901.1" text-anchor="middle" textLength="8.4" lengthAdjust="spacingAndGlyphs">1000</text>
<path class="k" d="M909.6 913.0L1015.5 913.0"/>
<text class="dm" x="962.5" y="912.4" text-anchor="middle" textLength="8.4" lengthAdjust="spacingAndGlyphs">1000</text>
<path class="k" d="M870.0 749.5L870.0 990.0M870.0 749.5L909.6 749.5"/>
<path class="gr" d="M891.6 749.5L891.6 990.0"/>
<text class="dm" x="868.5" y="911.0" text-anchor="start" transform="rotate(-90 868.5 911.0)" textLength="8.4" lengthAdjust="spacingAndGlyphs">3000</text>
<text class="dm" x="890.1" y="911.0" text-anchor="start" transform="rotate(-90 890.1 911.0)" textLength="8.4" lengthAdjust="spacingAndGlyphs">3000</text>
<text class="dm" x="913.1" y="911.0" text-anchor="start" transform="rotate(-90 913.1 911.0)" textLength="8.4" lengthAdjust="spacingAndGlyphs">3000</text>
<text class="dm" x="921.6" y="911.0" text-anchor="start" transform="rotate(-90 921.6 911.0)" textLength="8.4" lengthAdjust="spacingAndGlyphs">3000</text>
<rect class="wf" x="909.6" y="749.5" width="105.89999999999998" height="4.8"/><rect class="wf" x="909.6" y="759.6" width="105.89999999999998" height="4.8"/>
<path class="kk" d="M909.6 749.5L1015.5 749.5M909.6 754.3L1015.5 754.3M909.6 759.6L1015.5 759.6M909.6 764.4L1015.5 764.4M909.6 749.5L909.6 754.3M909.6 759.6L909.6 764.4M1015.5 749.5L1015.5 754.3M1015.5 759.6L1015.5 764.4M901.3 749.5L909.6 749.5M946.5 749.5L946.5 764.4M953.7 749.5L953.7 764.4"/>
<path class="hk" d="M909.6 754.3H903.5Q901.3 754.3 901.3 751.9V749.9M909.6 759.6H903.5Q901.3 759.6 901.3 762.0V764.0M1015.5 754.3H1021.6Q1023.8 754.3 1023.8 751.9V749.9M1015.5 759.6H1021.6Q1023.8 759.6 1023.8 762.0V764.0"/>
<path class="gr" d="M909.6 754.3L909.6 759.6M918.6 754.3L918.6 759.6M930.6 754.3L930.6 759.6M966.6 754.3L966.6 759.6M985.5 754.3L985.5 759.6M993.6 754.3L993.6 759.6M1011.6 754.3L1011.6 759.6"/>
<path class="k" d="M913.5 754.3L913.5 759.6M926.7 754.3L926.7 759.6M939.6 754.3L939.6 759.6M946.5 754.3L946.5 759.6M953.7 754.3L953.7 759.6M957.6 754.3L957.6 759.6M998.1 754.3L998.1 759.6M1015.5 754.3L1015.5 759.6M913.5 749.5L913.5 764.4"/>
<rect class="wf" x="909.6" y="848.6" width="105.89999999999998" height="4.8"/><rect class="wf" x="909.6" y="858.7" width="105.89999999999998" height="4.8"/>
<path class="kb" d="M909.6 848.6L1015.5 848.6M909.6 853.4L1015.5 853.4M909.6 858.7L1015.5 858.7M909.6 863.5L1015.5 863.5"/>
<path class="kk" d="M909.6 848.6L909.6 853.4M909.6 858.7L909.6 863.5M1015.5 848.6L1015.5 853.4M1015.5 858.7L1015.5 863.5M946.5 848.6L946.5 863.5M953.7 848.6L953.7 863.5"/>
<path class="hk" d="M909.6 853.4H903.5Q901.3 853.4 901.3 851.0V849.0M909.6 858.7H903.5Q901.3 858.7 901.3 861.1V863.1M1015.5 853.4H1021.6Q1023.8 853.4 1023.8 851.0V849.0M1015.5 858.7H1021.6Q1023.8 858.7 1023.8 861.1V863.1"/>
<path class="gr" d="M909.6 853.4L909.6 858.7M918.6 853.4L918.6 858.7M930.6 853.4L930.6 858.7M966.6 853.4L966.6 858.7M985.5 853.4L985.5 858.7M993.6 853.4L993.6 858.7M1011.6 853.4L1011.6 858.7"/>
<path class="k" d="M913.5 853.4L913.5 858.7M926.7 853.4L926.7 858.7M939.6 853.4L939.6 858.7M946.5 853.4L946.5 858.7M953.7 853.4L953.7 858.7M957.6 853.4L957.6 858.7M998.1 853.4L998.1 858.7M1015.5 853.4L1015.5 858.7M913.5 848.6L913.5 863.5"/>
<rect class="wf" x="909.6" y="953.2" width="105.89999999999998" height="4.8"/><rect class="wf" x="909.6" y="963.3000000000001" width="105.89999999999998" height="4.8"/>
<path class="kg" d="M909.6 953.2L1015.5 953.2M909.6 958.0L1015.5 958.0M909.6 963.3L1015.5 963.3M909.6 968.1L1015.5 968.1"/>
<path class="kk" d="M909.6 953.2L909.6 958.0M909.6 963.3L909.6 968.1M1015.5 953.2L1015.5 958.0M1015.5 963.3L1015.5 968.1M946.5 953.2L946.5 968.1M953.7 953.2L953.7 968.1"/>
<path class="hk" d="M909.6 958.0H903.5Q901.3 958.0 901.3 955.6V953.6M909.6 963.3H903.5Q901.3 963.3 901.3 965.7V967.7M1015.5 958.0H1021.6Q1023.8 958.0 1023.8 955.6V953.6M1015.5 963.3H1021.6Q1023.8 963.3 1023.8 965.7V967.7"/>
<path class="gr" d="M909.6 958.0L909.6 963.3M918.6 958.0L918.6 963.3M930.6 958.0L930.6 963.3M966.6 958.0L966.6 963.3M985.5 958.0L985.5 963.3M993.6 958.0L993.6 963.3M1011.6 958.0L1011.6 963.3"/>
<path class="k" d="M913.5 958.0L913.5 963.3M926.7 958.0L926.7 963.3M939.6 958.0L939.6 963.3M946.5 958.0L946.5 963.3M953.7 958.0L953.7 963.3M957.6 958.0L957.6 963.3M998.1 958.0L998.1 963.3M1015.5 958.0L1015.5 963.3M913.5 953.2L913.5 968.1"/>
<rect class="lb" x="769.5" y="288.0" width="18" height="5.6"/><path class="lt" d="M770.7 290.8H786.3"/>
<path class="gy" d="M769.5 293.5L766.0 299.0"/>
<rect class="lb" x="724.5" y="612.8" width="28.5" height="5.6"/><path class="lt" d="M725.7 615.6H751.8"/>
<rect class="lb" x="766.0" y="614.5" width="28.5" height="5.6"/><path class="lt" d="M767.2 617.3H793.3"/>
<rect class="lb" x="911.0" y="613.5" width="28.5" height="5.6"/><path class="lt" d="M912.2 616.3H938.3"/>
<rect class="lb" x="1014.5" y="601.5" width="28.5" height="5.6"/><path class="lt" d="M1015.7 604.3H1041.8"/>
<rect class="lb" x="925.2" y="578.5" width="4.6" height="18"/><path class="lt" d="M927.5 579.7V595.3"/>
<rect class="lb" x="737.5" y="740.8" width="18" height="5.6"/><path class="lt" d="M738.7 743.6H754.3"/>
<path class="gy" d="M755.5 745.5L763.0 752.0"/>
<text class="gt" x="771.8" y="658.6" text-anchor="start" textLength="25.5" lengthAdjust="spacingAndGlyphs">Ölçek 1:15</text>
<text class="gt" x="942.3" y="658.6" text-anchor="start" textLength="25.5" lengthAdjust="spacingAndGlyphs">Ölçek 1:15</text>
<text x="1031" y="673.2" font-size="8.6" fill="#78a66e" textLength="13.2" lengthAdjust="spacingAndGlyphs">No:1</text>
<path class="kk" d="M1076.7 251.6L1152.2 251.6L1152.2 362.8L1076.7 362.8zM1076.7 252.4L1152.2 252.4M1076.7 362.0L1152.2 362.0"/>
<path class="k" d="M1076.7 259.6L1152.2 259.6M1076.7 354.8L1152.2 354.8M1076.7 259.6L1069.3 259.6L1069.3 354.8L1076.7 354.8M1152.2 259.6L1159.6 259.6L1159.6 354.8L1152.2 354.8M1076.7 299.3L1152.2 299.3"/>
<path class="gr" d="M1070.9 259.6L1070.9 354.8M1158.0 259.6L1158.0 354.8M1111.4 259.6L1111.4 354.8M1117.1 259.6L1117.1 354.8M1076.7 315.3L1152.2 315.3"/>
<path class="w" d="M1098.4 260.0L1107.6 260.0L1107.6 263.6L1104.5 263.6L1104.5 277.0L1107.6 277.0L1107.6 280.6L1098.4 280.6L1098.4 277.0L1101.5 277.0L1101.5 263.6L1098.4 263.6zM1078.0 280.4L1078.0 289.6L1081.6 289.6L1081.6 286.5L1095.1 286.5L1095.1 289.6L1098.7 289.6L1098.7 280.4L1095.1 280.4L1095.1 283.5L1081.6 283.5L1081.6 280.4zM1121.3 260.0L1130.5 260.0L1130.5 263.6L1127.4 263.6L1127.4 277.0L1130.5 277.0L1130.5 280.6L1121.3 280.6L1121.3 277.0L1124.4 277.0L1124.4 263.6L1121.3 263.6zM1130.2 280.4L1130.2 289.6L1133.8 289.6L1133.8 286.5L1147.3 286.5L1147.3 289.6L1150.9 289.6L1150.9 280.4L1147.3 280.4L1147.3 283.5L1133.8 283.5L1133.8 280.4zM1098.4 333.8L1107.6 333.8L1107.6 337.4L1104.5 337.4L1104.5 350.8L1107.6 350.8L1107.6 354.4L1098.4 354.4L1098.4 350.8L1101.5 350.8L1101.5 337.4L1098.4 337.4zM1078.0 324.8L1078.0 334.0L1081.6 334.0L1081.6 330.9L1095.1 330.9L1095.1 334.0L1098.7 334.0L1098.7 324.8L1095.1 324.8L1095.1 327.9L1081.6 327.9L1081.6 324.8zM1121.3 333.8L1130.5 333.8L1130.5 337.4L1127.4 337.4L1127.4 350.8L1130.5 350.8L1130.5 354.4L1121.3 354.4L1121.3 350.8L1124.4 350.8L1124.4 337.4L1121.3 337.4zM1130.2 324.8L1130.2 334.0L1133.8 334.0L1133.8 330.9L1147.3 330.9L1147.3 334.0L1150.9 334.0L1150.9 324.8L1147.3 324.8L1147.3 327.9L1133.8 327.9L1133.8 324.8zM1078.0 302.7L1078.0 311.9L1081.6 311.9L1081.6 308.8L1095.1 308.8L1095.1 311.9L1098.7 311.9L1098.7 302.7L1095.1 302.7L1095.1 305.8L1081.6 305.8L1081.6 302.7zM1130.2 302.7L1130.2 311.9L1133.8 311.9L1133.8 308.8L1147.3 308.8L1147.3 311.9L1150.9 311.9L1150.9 302.7L1147.3 302.7L1147.3 305.8L1133.8 305.8L1133.8 302.7z"/>
<path class="k" d="M1098.4 276.6L1095.4 276.6L1095.4 280.6M1130.5 276.6L1133.5 276.6L1133.5 280.6M1098.4 337.8L1095.4 337.8L1095.4 333.8M1130.5 337.8L1133.5 337.8L1133.5 333.8"/>
<rect class="lb" x="1079.2" y="290.6" width="18" height="5"/><path class="lt" d="M1080.4 293.1H1096.0"/>
<rect class="lb" x="1063.4" y="326.0" width="5" height="28.5"/><path class="lt" d="M1065.9 327.2V353.3"/>
<rect class="lb" x="1091.0" y="355.8" width="29" height="5"/><path class="lt" d="M1092.2 358.3H1118.8"/>
<text class="gt" x="1100.0" y="369.0" text-anchor="start" textLength="25.5" lengthAdjust="spacingAndGlyphs">Ölçek 1:15</text>
<text class="dm" x="1112.5" y="311.5" text-anchor="start" transform="rotate(-90 1112.5 311.5)" textLength="8.4" lengthAdjust="spacingAndGlyphs">3000</text>
<text class="dm" x="1116.8" y="311.5" text-anchor="start" transform="rotate(-90 1116.8 311.5)" textLength="8.4" lengthAdjust="spacingAndGlyphs">3000</text>
<text class="dm" x="1114.2" y="298.3" text-anchor="middle" textLength="3.5" lengthAdjust="spacingAndGlyphs">22</text>
<text class="dm" x="1114.2" y="320.5" text-anchor="middle" textLength="3.5" lengthAdjust="spacingAndGlyphs">22</text>
<path class="k" d="M1087.0 705.4L1161.0 705.4L1161.0 827.0L1087.0 827.0zM1121.6 713.6L1121.6 818.8M1126.4 713.6L1126.4 818.8M1087.0 779.0L1161.0 779.0"/>
<path class="kk" d="M1087.0 706.2L1161.0 706.2M1087.0 826.2L1161.0 826.2M1087.0 713.6L1161.0 713.6M1087.0 818.8L1161.0 818.8M1087.0 713.6L1078.5 713.6L1078.5 818.8L1087.0 818.8M1161.0 713.6L1169.5 713.6L1169.5 818.8L1161.0 818.8M1079.2 713.6L1079.2 818.8M1168.8 713.6L1168.8 818.8"/>
<path class="gr" d="M1087.0 753.1L1161.0 753.1"/>
<path class="w" d="M1108.2 714.0L1117.4 714.0L1117.4 717.6L1114.3 717.6L1114.3 731.0L1117.4 731.0L1117.4 734.6L1108.2 734.6L1108.2 731.0L1111.3 731.0L1111.3 717.6L1108.2 717.6zM1088.3 734.4L1088.3 743.6L1091.9 743.6L1091.9 740.5L1105.4 740.5L1105.4 743.6L1109.0 743.6L1109.0 734.4L1105.4 734.4L1105.4 737.5L1091.9 737.5L1091.9 734.4zM1130.6 714.0L1139.8 714.0L1139.8 717.6L1136.7 717.6L1136.7 731.0L1139.8 731.0L1139.8 734.6L1130.6 734.6L1130.6 731.0L1133.7 731.0L1133.7 717.6L1130.6 717.6zM1139.0 734.4L1139.0 743.6L1142.6 743.6L1142.6 740.5L1156.1 740.5L1156.1 743.6L1159.7 743.6L1159.7 734.4L1156.1 734.4L1156.1 737.5L1142.6 737.5L1142.6 734.4zM1108.2 797.8L1117.4 797.8L1117.4 801.4L1114.3 801.4L1114.3 814.8L1117.4 814.8L1117.4 818.4L1108.2 818.4L1108.2 814.8L1111.3 814.8L1111.3 801.4L1108.2 801.4zM1088.3 788.8L1088.3 798.0L1091.9 798.0L1091.9 794.9L1105.4 794.9L1105.4 798.0L1109.0 798.0L1109.0 788.8L1105.4 788.8L1105.4 791.9L1091.9 791.9L1091.9 788.8zM1130.6 797.8L1139.8 797.8L1139.8 801.4L1136.7 801.4L1136.7 814.8L1139.8 814.8L1139.8 818.4L1130.6 818.4L1130.6 814.8L1133.7 814.8L1133.7 801.4L1130.6 801.4zM1139.0 788.8L1139.0 798.0L1142.6 798.0L1142.6 794.9L1156.1 794.9L1156.1 798.0L1159.7 798.0L1159.7 788.8L1156.1 788.8L1156.1 791.9L1142.6 791.9L1142.6 788.8zM1088.3 761.4L1088.3 770.6L1091.9 770.6L1091.9 767.5L1105.4 767.5L1105.4 770.6L1109.0 770.6L1109.0 761.4L1105.4 761.4L1105.4 764.5L1091.9 764.5L1091.9 761.4zM1139.0 761.4L1139.0 770.6L1142.6 770.6L1142.6 767.5L1156.1 767.5L1156.1 770.6L1159.7 770.6L1159.7 761.4L1156.1 761.4L1156.1 764.5L1142.6 764.5L1142.6 761.4z"/>
<path class="k" d="M1108.2 730.6L1105.2 730.6L1105.2 734.6M1139.8 730.6L1142.8 730.6L1142.8 734.6M1108.2 801.8L1105.2 801.8L1105.2 797.8M1139.8 801.8L1142.8 801.8L1142.8 797.8"/>
<rect class="lb" x="1088.5" y="745.0" width="18" height="5"/><path class="lt" d="M1089.7 747.5H1105.3"/>
<rect class="lb" x="1072.5" y="790.0" width="5" height="28.5"/><path class="lt" d="M1075.0 791.2V817.3"/>
<rect class="lb" x="1101.0" y="820.0" width="29" height="5"/><path class="lt" d="M1102.2 822.5H1128.8"/>
<text class="gt" x="1109.0" y="834.0" text-anchor="start" textLength="25.5" lengthAdjust="spacingAndGlyphs">Ölçek 1:15</text>
<text class="dm" x="1119.2" y="770.5" text-anchor="start" transform="rotate(-90 1119.2 770.5)" textLength="8.4" lengthAdjust="spacingAndGlyphs">3000</text>
<text class="dm" x="1125.5" y="770.5" text-anchor="start" transform="rotate(-90 1125.5 770.5)" textLength="8.4" lengthAdjust="spacingAndGlyphs">3000</text>
<text class="dm" x="1124.0" y="752.0" text-anchor="middle" textLength="3.5" lengthAdjust="spacingAndGlyphs">22</text>
<text class="dm" x="1124.0" y="778.5" text-anchor="middle" textLength="3.5" lengthAdjust="spacingAndGlyphs">22</text>
<path class="w" d="M1207.9 293.5L1276.2 262.6L1271.9 260.7L1203.6 291.5zM1207.9 293.5L1203.6 291.5L1203.6 296.6L1207.9 298.6zM1207.9 293.5L1276.2 262.6L1276.2 267.7L1207.9 298.6z"/>
<path class="w" d="M1330.4 286.6L1334.7 284.7L1281.5 260.7L1277.2 262.6zM1330.4 286.6L1277.2 262.6L1277.2 267.7L1330.4 291.7zM1330.4 286.6L1334.7 284.7L1334.7 289.8L1330.4 291.7z"/>
<path class="w" d="M1207.9 284.4L1276.2 253.5L1271.9 251.6L1203.6 282.4zM1207.9 284.4L1203.6 282.4L1203.6 287.5L1207.9 289.5zM1207.9 284.4L1276.2 253.5L1276.2 258.6L1207.9 289.5z"/>
<path class="w" d="M1330.4 277.5L1334.7 275.6L1281.5 251.6L1277.2 253.5zM1330.4 277.5L1277.2 253.5L1277.2 258.6L1330.4 282.6zM1330.4 277.5L1334.7 275.6L1334.7 280.7L1330.4 282.6z"/>
<path class="w" d="M1207.9 381.0L1276.2 350.1L1271.9 348.2L1203.6 379.0zM1207.9 381.0L1203.6 379.0L1203.6 384.1L1207.9 386.1zM1207.9 381.0L1276.2 350.1L1276.2 355.2L1207.9 386.1z"/>
<path class="w" d="M1330.4 374.1L1334.7 372.2L1281.5 348.2L1277.2 350.1zM1330.4 374.1L1277.2 350.1L1277.2 355.2L1330.4 379.2zM1330.4 374.1L1334.7 372.2L1334.7 377.3L1330.4 379.2z"/>
<path class="w" d="M1207.9 371.9L1276.2 341.0L1271.9 339.1L1203.6 369.9zM1207.9 371.9L1203.6 369.9L1203.6 375.0L1207.9 377.0zM1207.9 371.9L1276.2 341.0L1276.2 346.1L1207.9 377.0z"/>
<path class="w" d="M1330.4 365.0L1334.7 363.1L1281.5 339.1L1277.2 341.0zM1330.4 365.0L1277.2 341.0L1277.2 346.1L1330.4 370.1zM1330.4 365.0L1334.7 363.1L1334.7 368.2L1330.4 370.1z"/>
<path class="w" d="M1207.9 475.3L1276.2 444.4L1271.9 442.5L1203.6 473.3zM1207.9 475.3L1203.6 473.3L1203.6 478.4L1207.9 480.4zM1207.9 475.3L1276.2 444.4L1276.2 449.5L1207.9 480.4z"/>
<path class="w" d="M1330.4 468.4L1334.7 466.5L1281.5 442.5L1277.2 444.4zM1330.4 468.4L1277.2 444.4L1277.2 449.5L1330.4 473.5zM1330.4 468.4L1334.7 466.5L1334.7 471.6L1330.4 473.5z"/>
<path class="w" d="M1207.9 466.2L1276.2 435.3L1271.9 433.4L1203.6 464.2zM1207.9 466.2L1203.6 464.2L1203.6 469.3L1207.9 471.3zM1207.9 466.2L1276.2 435.3L1276.2 440.4L1207.9 471.3z"/>
<path class="w" d="M1330.4 459.3L1334.7 457.4L1281.5 433.4L1277.2 435.3zM1330.4 459.3L1277.2 435.3L1277.2 440.4L1330.4 464.4zM1330.4 459.3L1334.7 457.4L1334.7 462.5L1330.4 464.4z"/>
<path class="w" d="M1207.9 563.5L1276.2 532.6L1271.9 530.7L1203.6 561.5zM1207.9 563.5L1203.6 561.5L1203.6 566.6L1207.9 568.6zM1207.9 563.5L1276.2 532.6L1276.2 537.7L1207.9 568.6z"/>
<path class="w" d="M1330.4 556.6L1334.7 554.7L1281.5 530.7L1277.2 532.6zM1330.4 556.6L1277.2 532.6L1277.2 537.7L1330.4 561.7zM1330.4 556.6L1334.7 554.7L1334.7 559.8L1330.4 561.7z"/>
<path class="w" d="M1207.9 554.4L1276.2 523.5L1271.9 521.6L1203.6 552.4zM1207.9 554.4L1203.6 552.4L1203.6 557.5L1207.9 559.5zM1207.9 554.4L1276.2 523.5L1276.2 528.6L1207.9 559.5z"/>
<path class="w" d="M1330.4 547.5L1334.7 545.6L1281.5 521.6L1277.2 523.5zM1330.4 547.5L1277.2 523.5L1277.2 528.6L1330.4 552.6zM1330.4 547.5L1334.7 545.6L1334.7 550.7L1330.4 552.6z"/>
<path class="wf" d="M1277.0 265.5L1291.5 259.0L1297.8 261.8L1297.8 547.0L1283.3 553.6L1277.0 550.7z"/>
<path class="k" d="M1277.0 265.5L1277.0 550.7M1283.3 268.4L1283.3 553.6M1297.8 261.8L1297.8 547.0"/>
<path class="k1" d="M1285.7 267.3L1285.7 552.5M1295.4 262.9L1295.4 548.1"/>
<path class="gr" d="M1293.2 262.0L1293.2 547.2"/>
<path class="w" d="M1283.3 268.4L1277.0 265.5L1279.4 264.5L1281.5 265.4L1291.2 261.1L1289.1 260.1L1291.5 259.0L1297.8 261.8L1295.4 262.9L1293.2 262.0L1283.5 266.3L1285.7 267.3z"/>
<path class="wf" d="M1256.6 262.1L1263.2 259.2L1277.3 265.6L1277.3 550.8L1270.8 553.7L1256.6 547.3z"/>
<path class="k" d="M1256.6 262.1L1256.6 547.3M1270.8 268.5L1270.8 553.7M1277.3 265.6L1277.3 550.8"/>
<path class="k1" d="M1268.4 267.4L1268.4 552.6M1259.0 263.2L1259.0 548.4"/>
<path class="gr" d="M1261.3 262.2L1261.3 547.4"/>
<path class="w" d="M1270.8 268.5L1277.3 265.6L1274.9 264.5L1272.7 265.5L1263.3 261.3L1265.6 260.3L1263.2 259.2L1256.6 262.1L1259.0 263.2L1261.3 262.2L1270.7 266.4L1268.4 267.4z"/>
<path class="wf" d="M1292.7 272.6L1307.2 266.1L1313.5 268.9L1313.5 554.1L1299.0 560.7L1292.7 557.8z"/>
<path class="k" d="M1292.7 272.6L1292.7 557.8M1299.0 275.5L1299.0 560.7M1313.5 268.9L1313.5 554.1"/>
<path class="k1" d="M1301.4 274.4L1301.4 559.6M1311.1 270.0L1311.1 555.2"/>
<path class="gr" d="M1308.9 269.0L1308.9 554.2"/>
<path class="w" d="M1299.0 275.5L1292.7 272.6L1295.1 271.5L1297.2 272.5L1306.9 268.1L1304.8 267.2L1307.2 266.1L1313.5 268.9L1311.1 270.0L1308.9 269.0L1299.2 273.4L1301.4 274.4z"/>
<path class="wf" d="M1240.9 269.2L1247.5 266.3L1261.6 272.7L1261.6 557.9L1255.1 560.8L1240.9 554.4z"/>
<path class="k" d="M1240.9 269.2L1240.9 554.4M1255.1 275.6L1255.1 560.8M1261.6 272.7L1261.6 557.9"/>
<path class="k1" d="M1252.7 274.5L1252.7 559.7M1243.3 270.3L1243.3 555.5"/>
<path class="gr" d="M1245.6 269.3L1245.6 554.5"/>
<path class="w" d="M1255.1 275.6L1261.6 272.7L1259.2 271.6L1257.0 272.6L1247.6 268.4L1249.9 267.3L1247.5 266.3L1240.9 269.2L1243.3 270.3L1245.6 269.3L1255.0 273.5L1252.7 274.5z"/>
<path class="wf" d="M1225.2 276.3L1231.8 273.4L1245.9 279.7L1245.9 564.9L1239.4 567.9L1225.2 561.5z"/>
<path class="k" d="M1225.2 276.3L1225.2 561.5M1239.4 282.7L1239.4 567.9M1245.9 279.7L1245.9 564.9"/>
<path class="k1" d="M1237.0 281.6L1237.0 566.8M1227.6 277.4L1227.6 562.6"/>
<path class="gr" d="M1229.9 276.4L1229.9 561.6"/>
<path class="w" d="M1239.4 282.7L1245.9 279.7L1243.5 278.7L1241.3 279.7L1231.9 275.5L1234.2 274.4L1231.8 273.4L1225.2 276.3L1227.6 277.4L1229.9 276.4L1239.3 280.6L1237.0 281.6z"/>
<path class="wf" d="M1292.4 278.3L1298.9 275.3L1313.1 281.7L1313.1 566.9L1306.5 569.9L1292.4 563.5z"/>
<path class="k" d="M1292.4 278.3L1292.4 563.5M1306.5 284.7L1306.5 569.9M1313.1 281.7L1313.1 566.9"/>
<path class="k1" d="M1304.1 283.6L1304.1 568.8M1294.8 279.3L1294.8 564.5"/>
<path class="gr" d="M1297.0 278.3L1297.0 563.5"/>
<path class="w" d="M1306.5 284.7L1313.1 281.7L1310.7 280.6L1308.4 281.6L1299.0 277.4L1301.3 276.4L1298.9 275.3L1292.4 278.3L1294.8 279.3L1297.0 278.3L1306.4 282.5L1304.1 283.6z"/>
<path class="wf" d="M1276.7 285.3L1283.2 282.4L1297.4 288.8L1297.4 574.0L1290.8 576.9L1276.7 570.5z"/>
<path class="k" d="M1276.7 285.3L1276.7 570.5M1290.8 291.7L1290.8 576.9M1297.4 288.8L1297.4 574.0"/>
<path class="k1" d="M1288.4 290.7L1288.4 575.9M1279.1 286.4L1279.1 571.6"/>
<path class="gr" d="M1281.3 285.4L1281.3 570.6"/>
<path class="w" d="M1290.8 291.7L1297.4 288.8L1295.0 287.7L1292.7 288.7L1283.3 284.5L1285.6 283.5L1283.2 282.4L1276.7 285.3L1279.1 286.4L1281.3 285.4L1290.7 289.6L1288.4 290.7z"/>
<path class="wf" d="M1224.8 289.1L1239.3 282.5L1245.6 285.4L1245.6 570.6L1231.1 577.1L1224.8 574.3z"/>
<path class="k" d="M1224.8 289.1L1224.8 574.3M1231.1 291.9L1231.1 577.1M1245.6 285.4L1245.6 570.6"/>
<path class="k1" d="M1233.5 290.8L1233.5 576.0M1243.2 286.5L1243.2 571.7"/>
<path class="gr" d="M1241.1 285.5L1241.1 570.7"/>
<path class="w" d="M1231.1 291.9L1224.8 289.1L1227.2 288.0L1229.4 289.0L1239.1 284.6L1236.9 283.6L1239.3 282.5L1245.6 285.4L1243.2 286.5L1241.1 285.5L1231.4 289.9L1233.5 290.8z"/>
<path class="wf" d="M1261.0 292.4L1267.5 289.5L1281.7 295.9L1281.7 581.1L1275.1 584.0L1261.0 577.6z"/>
<path class="k" d="M1261.0 292.4L1261.0 577.6M1275.1 298.8L1275.1 584.0M1281.7 295.9L1281.7 581.1"/>
<path class="k1" d="M1272.7 297.7L1272.7 582.9M1263.4 293.5L1263.4 578.7"/>
<path class="gr" d="M1265.6 292.5L1265.6 577.7"/>
<path class="w" d="M1275.1 298.8L1281.7 295.9L1279.3 294.8L1277.0 295.8L1267.6 291.6L1269.9 290.6L1267.5 289.5L1261.0 292.4L1263.4 293.5L1265.6 292.5L1275.0 296.7L1272.7 297.7z"/>
<path class="wf" d="M1240.5 296.2L1255.0 289.6L1261.3 292.5L1261.3 577.7L1246.8 584.2L1240.5 581.4z"/>
<path class="k" d="M1240.5 296.2L1240.5 581.4M1246.8 299.0L1246.8 584.2M1261.3 292.5L1261.3 577.7"/>
<path class="k1" d="M1249.2 297.9L1249.2 583.1M1258.9 293.6L1258.9 578.8"/>
<path class="gr" d="M1256.8 292.6L1256.8 577.8"/>
<path class="w" d="M1246.8 299.0L1240.5 296.2L1242.9 295.1L1245.1 296.1L1254.8 291.7L1252.6 290.7L1255.0 289.6L1261.3 292.5L1258.9 293.6L1256.8 292.6L1247.1 297.0L1249.2 297.9z"/>
<path class="w" d="M1256.8 315.5L1261.1 313.6L1207.9 289.6L1203.6 291.5zM1256.8 315.5L1203.6 291.5L1203.6 296.6L1256.8 320.6zM1256.8 315.5L1261.1 313.6L1261.1 318.7L1256.8 320.6z"/>
<path class="w" d="M1266.4 315.5L1334.7 284.7L1330.4 282.8L1262.1 313.6zM1266.4 315.5L1262.1 313.6L1262.1 318.7L1266.4 320.6zM1266.4 315.5L1334.7 284.7L1334.7 289.8L1266.4 320.6z"/>
<path class="kk" d="M1256.8 315.5L1203.6 291.5M1266.4 315.5L1334.7 284.7"/>
<path class="w" d="M1256.8 306.4L1261.1 304.5L1207.9 280.5L1203.6 282.4zM1256.8 306.4L1203.6 282.4L1203.6 287.5L1256.8 311.5zM1256.8 306.4L1261.1 304.5L1261.1 309.6L1256.8 311.5z"/>
<path class="w" d="M1266.4 306.4L1334.7 275.6L1330.4 273.7L1262.1 304.5zM1266.4 306.4L1262.1 304.5L1262.1 309.6L1266.4 311.5zM1266.4 306.4L1334.7 275.6L1334.7 280.7L1266.4 311.5z"/>
<path class="kk" d="M1256.8 306.4L1203.6 282.4M1266.4 306.4L1334.7 275.6M1261.6 306.2L1261.6 313.5M1261.6 315.3L1261.6 322.6"/>
<path class="k" d="M1258.2 308.2L1261.6 306.2L1265.0 308.2M1258.2 314.1L1261.6 312.3L1265.0 314.1M1258.2 317.3L1261.6 315.3L1265.0 317.3M1258.2 323.2L1261.6 321.4L1265.0 323.2"/>
<path class="w" d="M1256.8 403.0L1261.1 401.1L1207.9 377.1L1203.6 379.0zM1256.8 403.0L1203.6 379.0L1203.6 384.1L1256.8 408.1zM1256.8 403.0L1261.1 401.1L1261.1 406.2L1256.8 408.1z"/>
<path class="w" d="M1266.4 403.0L1334.7 372.2L1330.4 370.3L1262.1 401.1zM1266.4 403.0L1262.1 401.1L1262.1 406.2L1266.4 408.1zM1266.4 403.0L1334.7 372.2L1334.7 377.3L1266.4 408.1z"/>
<path class="kk" d="M1256.8 403.0L1203.6 379.0M1266.4 403.0L1334.7 372.2"/>
<path class="w" d="M1256.8 393.9L1261.1 392.0L1207.9 368.0L1203.6 369.9zM1256.8 393.9L1203.6 369.9L1203.6 375.0L1256.8 399.0zM1256.8 393.9L1261.1 392.0L1261.1 397.1L1256.8 399.0z"/>
<path class="w" d="M1266.4 393.9L1334.7 363.1L1330.4 361.2L1262.1 392.0zM1266.4 393.9L1262.1 392.0L1262.1 397.1L1266.4 399.0zM1266.4 393.9L1334.7 363.1L1334.7 368.2L1266.4 399.0z"/>
<path class="kk" d="M1256.8 393.9L1203.6 369.9M1266.4 393.9L1334.7 363.1M1261.6 393.7L1261.6 401.0M1261.6 402.8L1261.6 410.1"/>
<path class="k" d="M1258.2 395.7L1261.6 393.7L1265.0 395.7M1258.2 401.6L1261.6 399.8L1265.0 401.6M1258.2 404.8L1261.6 402.8L1265.0 404.8M1258.2 410.7L1261.6 408.9L1265.0 410.7"/>
<path class="w" d="M1256.8 497.3L1261.1 495.4L1207.9 471.4L1203.6 473.3zM1256.8 497.3L1203.6 473.3L1203.6 478.4L1256.8 502.4zM1256.8 497.3L1261.1 495.4L1261.1 500.5L1256.8 502.4z"/>
<path class="w" d="M1266.4 497.3L1334.7 466.5L1330.4 464.6L1262.1 495.4zM1266.4 497.3L1262.1 495.4L1262.1 500.5L1266.4 502.4zM1266.4 497.3L1334.7 466.5L1334.7 471.6L1266.4 502.4z"/>
<path class="kk" d="M1256.8 497.3L1203.6 473.3M1266.4 497.3L1334.7 466.5"/>
<path class="w" d="M1256.8 488.2L1261.1 486.3L1207.9 462.3L1203.6 464.2zM1256.8 488.2L1203.6 464.2L1203.6 469.3L1256.8 493.3zM1256.8 488.2L1261.1 486.3L1261.1 491.4L1256.8 493.3z"/>
<path class="w" d="M1266.4 488.2L1334.7 457.4L1330.4 455.5L1262.1 486.3zM1266.4 488.2L1262.1 486.3L1262.1 491.4L1266.4 493.3zM1266.4 488.2L1334.7 457.4L1334.7 462.5L1266.4 493.3z"/>
<path class="kk" d="M1256.8 488.2L1203.6 464.2M1266.4 488.2L1334.7 457.4M1261.6 488.0L1261.6 495.3M1261.6 497.1L1261.6 504.4"/>
<path class="k" d="M1258.2 490.0L1261.6 488.0L1265.0 490.0M1258.2 495.9L1261.6 494.1L1265.0 495.9M1258.2 499.1L1261.6 497.1L1265.0 499.1M1258.2 505.0L1261.6 503.2L1265.0 505.0"/>
<path class="w" d="M1256.8 585.5L1261.1 583.6L1207.9 559.6L1203.6 561.5zM1256.8 585.5L1203.6 561.5L1203.6 566.6L1256.8 590.6zM1256.8 585.5L1261.1 583.6L1261.1 588.7L1256.8 590.6z"/>
<path class="w" d="M1266.4 585.5L1334.7 554.7L1330.4 552.8L1262.1 583.6zM1266.4 585.5L1262.1 583.6L1262.1 588.7L1266.4 590.6zM1266.4 585.5L1334.7 554.7L1334.7 559.8L1266.4 590.6z"/>
<path class="kk" d="M1256.8 585.5L1203.6 561.5M1266.4 585.5L1334.7 554.7"/>
<path class="w" d="M1256.8 576.4L1261.1 574.5L1207.9 550.5L1203.6 552.4zM1256.8 576.4L1203.6 552.4L1203.6 557.5L1256.8 581.5zM1256.8 576.4L1261.1 574.5L1261.1 579.6L1256.8 581.5z"/>
<path class="w" d="M1266.4 576.4L1334.7 545.6L1330.4 543.7L1262.1 574.5zM1266.4 576.4L1262.1 574.5L1262.1 579.6L1266.4 581.5zM1266.4 576.4L1334.7 545.6L1334.7 550.7L1266.4 581.5z"/>
<path class="kk" d="M1256.8 576.4L1203.6 552.4M1266.4 576.4L1334.7 545.6M1261.6 576.2L1261.6 583.5M1261.6 585.3L1261.6 592.6"/>
<path class="k" d="M1258.2 578.2L1261.6 576.2L1265.0 578.2M1258.2 584.1L1261.6 582.3L1265.0 584.1M1258.2 587.3L1261.6 585.3L1265.0 587.3M1258.2 593.2L1261.6 591.4L1265.0 593.2"/>
<rect class="lb" x="1227.5" y="254.2" width="18.5" height="5.2"/><path class="lt" d="M1228.7 256.8H1244.8"/>
<path class="gy" d="M1246.0 258.0L1254.0 269.0"/>
<rect class="lb" x="1180.3" y="536.0" width="28.5" height="5.2"/><path class="lt" d="M1181.5 538.6H1207.6"/>
<path class="gy" d="M1208.8 540.0L1218.0 543.5"/>
<rect class="lb" x="1322.3" y="531.4" width="28.5" height="5.2"/><path class="lt" d="M1323.5 534.0H1349.6"/>
<text class="gt" x="1249.0" y="599.5" text-anchor="start" textLength="33.1" lengthAdjust="spacingAndGlyphs">3D Ölçek 1:15</text>
<path class="w" d="M1216.9 758.3L1293.1 723.9L1288.8 721.9L1212.6 756.3zM1216.9 758.3L1212.6 756.3L1212.6 761.4L1216.9 763.4zM1216.9 758.3L1293.1 723.9L1293.1 729.0L1216.9 763.4z"/>
<path class="w" d="M1347.7 748.1L1352.0 746.1L1298.4 721.9L1294.1 723.9zM1347.7 748.1L1294.1 723.9L1294.1 729.0L1347.7 753.2zM1347.7 748.1L1352.0 746.1L1352.0 751.2L1347.7 753.2z"/>
<path class="w" d="M1216.9 749.2L1293.1 714.8L1288.8 712.8L1212.6 747.2zM1216.9 749.2L1212.6 747.2L1212.6 752.3L1216.9 754.3zM1216.9 749.2L1293.1 714.8L1293.1 719.9L1216.9 754.3z"/>
<path class="w" d="M1347.7 739.0L1352.0 737.0L1298.4 712.8L1294.1 714.8zM1347.7 739.0L1294.1 714.8L1294.1 719.9L1347.7 744.1zM1347.7 739.0L1352.0 737.0L1352.0 742.1L1347.7 744.1z"/>
<path class="w" d="M1216.9 845.9L1293.1 811.5L1288.8 809.5L1212.6 843.9zM1216.9 845.9L1212.6 843.9L1212.6 849.0L1216.9 851.0zM1216.9 845.9L1293.1 811.5L1293.1 816.6L1216.9 851.0z"/>
<path class="w" d="M1347.7 835.7L1352.0 833.7L1298.4 809.5L1294.1 811.5zM1347.7 835.7L1294.1 811.5L1294.1 816.6L1347.7 840.8zM1347.7 835.7L1352.0 833.7L1352.0 838.8L1347.7 840.8z"/>
<path class="w" d="M1216.9 836.8L1293.1 802.4L1288.8 800.4L1212.6 834.8zM1216.9 836.8L1212.6 834.8L1212.6 839.9L1216.9 841.9zM1216.9 836.8L1293.1 802.4L1293.1 807.5L1216.9 841.9z"/>
<path class="w" d="M1347.7 826.6L1352.0 824.6L1298.4 800.4L1294.1 802.4zM1347.7 826.6L1294.1 802.4L1294.1 807.5L1347.7 831.7zM1347.7 826.6L1352.0 824.6L1352.0 829.7L1347.7 831.7z"/>
<path class="w" d="M1216.9 940.3L1293.1 905.9L1288.8 903.9L1212.6 938.3zM1216.9 940.3L1212.6 938.3L1212.6 943.4L1216.9 945.4zM1216.9 940.3L1293.1 905.9L1293.1 911.0L1216.9 945.4z"/>
<path class="w" d="M1347.7 930.1L1352.0 928.1L1298.4 903.9L1294.1 905.9zM1347.7 930.1L1294.1 905.9L1294.1 911.0L1347.7 935.2zM1347.7 930.1L1352.0 928.1L1352.0 933.2L1347.7 935.2z"/>
<path class="w" d="M1216.9 931.2L1293.1 896.8L1288.8 894.8L1212.6 929.2zM1216.9 931.2L1212.6 929.2L1212.6 934.3L1216.9 936.3zM1216.9 931.2L1293.1 896.8L1293.1 901.9L1216.9 936.3z"/>
<path class="w" d="M1347.7 921.0L1352.0 919.0L1298.4 894.8L1294.1 896.8zM1347.7 921.0L1294.1 896.8L1294.1 901.9L1347.7 926.1zM1347.7 921.0L1352.0 919.0L1352.0 924.1L1347.7 926.1z"/>
<path class="w" d="M1216.9 1028.3L1293.1 993.9L1288.8 991.9L1212.6 1026.3zM1216.9 1028.3L1212.6 1026.3L1212.6 1031.4L1216.9 1033.4zM1216.9 1028.3L1293.1 993.9L1293.1 999.0L1216.9 1033.4z"/>
<path class="w" d="M1347.7 1018.1L1352.0 1016.1L1298.4 991.9L1294.1 993.9zM1347.7 1018.1L1294.1 993.9L1294.1 999.0L1347.7 1023.2zM1347.7 1018.1L1352.0 1016.1L1352.0 1021.2L1347.7 1023.2z"/>
<path class="w" d="M1216.9 1019.2L1293.1 984.8L1288.8 982.8L1212.6 1017.2zM1216.9 1019.2L1212.6 1017.2L1212.6 1022.3L1216.9 1024.3zM1216.9 1019.2L1293.1 984.8L1293.1 989.9L1216.9 1024.3z"/>
<path class="w" d="M1347.7 1009.0L1352.0 1007.0L1298.4 982.8L1294.1 984.8zM1347.7 1009.0L1294.1 984.8L1294.1 989.9L1347.7 1014.1zM1347.7 1009.0L1352.0 1007.0L1352.0 1012.1L1347.7 1014.1z"/>
<path class="wf" d="M1294.0 726.8L1308.6 720.2L1315.1 723.1L1315.1 1008.3L1300.4 1014.9L1294.0 1012.0z"/>
<path class="k" d="M1294.0 726.8L1294.0 1012.0M1300.4 729.7L1300.4 1014.9M1315.1 723.1L1315.1 1008.3"/>
<path class="k1" d="M1302.8 728.6L1302.8 1013.8M1312.7 724.2L1312.7 1009.4"/>
<path class="gr" d="M1310.4 723.2L1310.4 1008.4"/>
<path class="w" d="M1300.4 729.7L1294.0 726.8L1296.4 725.7L1298.6 726.7L1308.4 722.3L1306.2 721.3L1308.6 720.2L1315.1 723.1L1312.7 724.2L1310.4 723.2L1300.6 727.6L1302.8 728.6z"/>
<path class="wf" d="M1273.5 723.4L1280.1 720.4L1294.7 727.0L1294.7 1012.2L1288.1 1015.2L1273.5 1008.6z"/>
<path class="k" d="M1273.5 723.4L1273.5 1008.6M1288.1 730.0L1288.1 1015.2M1294.7 727.0L1294.7 1012.2"/>
<path class="k1" d="M1285.7 728.9L1285.7 1014.1M1275.9 724.5L1275.9 1009.7"/>
<path class="gr" d="M1278.2 723.4L1278.2 1008.6"/>
<path class="w" d="M1288.1 730.0L1294.7 727.0L1292.3 725.9L1290.0 726.9L1280.2 722.5L1282.5 721.5L1280.1 720.4L1273.5 723.4L1275.9 724.5L1278.2 723.4L1288.0 727.9L1285.7 728.9z"/>
<path class="wf" d="M1309.8 733.9L1324.4 727.3L1330.9 730.3L1330.9 1015.5L1316.3 1022.1L1309.8 1019.1z"/>
<path class="k" d="M1309.8 733.9L1309.8 1019.1M1316.3 736.9L1316.3 1022.1M1330.9 730.3L1330.9 1015.5"/>
<path class="k1" d="M1318.7 735.8L1318.7 1021.0M1328.5 731.3L1328.5 1016.5"/>
<path class="gr" d="M1326.3 730.3L1326.3 1015.5"/>
<path class="w" d="M1316.3 736.9L1309.8 733.9L1312.2 732.9L1314.4 733.9L1324.3 729.4L1322.0 728.4L1324.4 727.3L1330.9 730.3L1328.5 731.3L1326.3 730.3L1316.4 734.8L1318.7 735.8z"/>
<path class="wf" d="M1253.9 732.3L1260.5 729.3L1275.0 735.9L1275.0 1021.1L1268.4 1024.1L1253.9 1017.5z"/>
<path class="k" d="M1253.9 732.3L1253.9 1017.5M1268.4 738.9L1268.4 1024.1M1275.0 735.9L1275.0 1021.1"/>
<path class="k1" d="M1266.0 737.8L1266.0 1023.0M1256.3 733.4L1256.3 1018.6"/>
<path class="gr" d="M1258.6 732.3L1258.6 1017.5"/>
<path class="w" d="M1268.4 738.9L1275.0 735.9L1272.6 734.8L1270.3 735.8L1260.6 731.4L1262.9 730.4L1260.5 729.3L1253.9 732.3L1256.3 733.4L1258.6 732.3L1268.3 736.7L1266.0 737.8z"/>
<path class="wf" d="M1309.2 739.5L1315.8 736.5L1330.4 743.1L1330.4 1028.3L1323.8 1031.3L1309.2 1024.7z"/>
<path class="k" d="M1309.2 739.5L1309.2 1024.7M1323.8 746.1L1323.8 1031.3M1330.4 743.1L1330.4 1028.3"/>
<path class="k1" d="M1321.4 745.0L1321.4 1030.2M1311.6 740.6L1311.6 1025.8"/>
<path class="gr" d="M1313.9 739.6L1313.9 1024.8"/>
<path class="w" d="M1323.8 746.1L1330.4 743.1L1328.0 742.0L1325.7 743.1L1315.9 738.7L1318.2 737.6L1315.8 736.5L1309.2 739.5L1311.6 740.6L1313.9 739.6L1323.7 744.0L1321.4 745.0z"/>
<path class="wf" d="M1234.2 741.2L1240.8 738.2L1255.4 744.8L1255.4 1030.0L1248.8 1032.9L1234.2 1026.4z"/>
<path class="k" d="M1234.2 741.2L1234.2 1026.4M1248.8 747.7L1248.8 1032.9M1255.4 744.8L1255.4 1030.0"/>
<path class="k1" d="M1246.4 746.6L1246.4 1031.8M1236.6 742.2L1236.6 1027.4"/>
<path class="gr" d="M1238.9 741.2L1238.9 1026.4"/>
<path class="w" d="M1248.8 747.7L1255.4 744.8L1253.0 743.7L1250.7 744.7L1240.9 740.3L1243.2 739.3L1240.8 738.2L1234.2 741.2L1236.6 742.2L1238.9 741.2L1248.7 745.6L1246.4 746.6z"/>
<path class="wf" d="M1289.6 748.4L1296.2 745.4L1310.7 752.0L1310.7 1037.2L1304.1 1040.2L1289.6 1033.6z"/>
<path class="k" d="M1289.6 748.4L1289.6 1033.6M1304.1 755.0L1304.1 1040.2M1310.7 752.0L1310.7 1037.2"/>
<path class="k1" d="M1301.7 753.9L1301.7 1039.1M1292.0 749.5L1292.0 1034.7"/>
<path class="gr" d="M1294.3 748.4L1294.3 1033.6"/>
<path class="w" d="M1304.1 755.0L1310.7 752.0L1308.3 750.9L1306.0 751.9L1296.3 747.5L1298.6 746.5L1296.2 745.4L1289.6 748.4L1292.0 749.5L1294.3 748.4L1304.0 752.8L1301.7 753.9z"/>
<path class="wf" d="M1233.7 754.0L1248.3 747.4L1254.8 750.3L1254.8 1035.5L1240.2 1042.1L1233.7 1039.2z"/>
<path class="k" d="M1233.7 754.0L1233.7 1039.2M1240.2 756.9L1240.2 1042.1M1254.8 750.3L1254.8 1035.5"/>
<path class="k1" d="M1242.6 755.8L1242.6 1041.0M1252.4 751.4L1252.4 1036.6"/>
<path class="gr" d="M1250.2 750.4L1250.2 1035.6"/>
<path class="w" d="M1240.2 756.9L1233.7 754.0L1236.1 752.9L1238.3 753.9L1248.2 749.5L1245.9 748.5L1248.3 747.4L1254.8 750.3L1252.4 751.4L1250.2 750.4L1240.3 754.8L1242.6 755.8z"/>
<path class="wf" d="M1269.9 757.3L1276.5 754.3L1291.1 760.9L1291.1 1046.1L1284.5 1049.0L1269.9 1042.5z"/>
<path class="k" d="M1269.9 757.3L1269.9 1042.5M1284.5 763.8L1284.5 1049.0M1291.1 760.9L1291.1 1046.1"/>
<path class="k1" d="M1282.1 762.8L1282.1 1048.0M1272.3 758.3L1272.3 1043.5"/>
<path class="gr" d="M1274.6 757.3L1274.6 1042.5"/>
<path class="w" d="M1284.5 763.8L1291.1 760.9L1288.7 759.8L1286.4 760.8L1276.6 756.4L1278.9 755.4L1276.5 754.3L1269.9 757.3L1272.3 758.3L1274.6 757.3L1284.4 761.7L1282.1 762.8z"/>
<path class="wf" d="M1249.5 761.1L1264.2 754.5L1270.6 757.5L1270.6 1042.7L1256.0 1049.3L1249.5 1046.3z"/>
<path class="k" d="M1249.5 761.1L1249.5 1046.3M1256.0 764.1L1256.0 1049.3M1270.6 757.5L1270.6 1042.7"/>
<path class="k1" d="M1258.4 763.0L1258.4 1048.2M1268.2 758.6L1268.2 1043.8"/>
<path class="gr" d="M1266.0 757.5L1266.0 1042.7"/>
<path class="w" d="M1256.0 764.1L1249.5 761.1L1251.9 760.1L1254.2 761.1L1264.0 756.6L1261.8 755.6L1264.2 754.5L1270.6 757.5L1268.2 758.6L1266.0 757.5L1256.2 762.0L1258.4 763.0z"/>
<path class="w" d="M1266.2 780.5L1270.5 778.6L1216.9 754.4L1212.6 756.3zM1266.2 780.5L1212.6 756.3L1212.6 761.4L1266.2 785.6zM1266.2 780.5L1270.5 778.6L1270.5 783.7L1266.2 785.6z"/>
<path class="w" d="M1275.8 780.5L1352.0 746.1L1347.7 744.2L1271.5 778.6zM1275.8 780.5L1271.5 778.6L1271.5 783.7L1275.8 785.6zM1275.8 780.5L1352.0 746.1L1352.0 751.2L1275.8 785.6z"/>
<path class="kk" d="M1266.2 780.5L1212.6 756.3M1275.8 780.5L1352.0 746.1"/>
<path class="w" d="M1266.2 771.4L1270.5 769.5L1216.9 745.3L1212.6 747.2zM1266.2 771.4L1212.6 747.2L1212.6 752.3L1266.2 776.5zM1266.2 771.4L1270.5 769.5L1270.5 774.6L1266.2 776.5z"/>
<path class="w" d="M1275.8 771.4L1352.0 737.0L1347.7 735.1L1271.5 769.5zM1275.8 771.4L1271.5 769.5L1271.5 774.6L1275.8 776.5zM1275.8 771.4L1352.0 737.0L1352.0 742.1L1275.8 776.5z"/>
<path class="kk" d="M1266.2 771.4L1212.6 747.2M1275.8 771.4L1352.0 737.0M1271.0 771.2L1271.0 778.5M1271.0 780.3L1271.0 787.6"/>
<path class="k" d="M1267.6 773.2L1271.0 771.2L1274.4 773.2M1267.6 779.1L1271.0 777.3L1274.4 779.1M1267.6 782.3L1271.0 780.3L1274.4 782.3M1267.6 788.2L1271.0 786.4L1274.4 788.2"/>
<path class="w" d="M1266.2 868.1L1270.5 866.2L1216.9 842.0L1212.6 843.9zM1266.2 868.1L1212.6 843.9L1212.6 849.0L1266.2 873.2zM1266.2 868.1L1270.5 866.2L1270.5 871.3L1266.2 873.2z"/>
<path class="w" d="M1275.8 868.1L1352.0 833.7L1347.7 831.8L1271.5 866.2zM1275.8 868.1L1271.5 866.2L1271.5 871.3L1275.8 873.2zM1275.8 868.1L1352.0 833.7L1352.0 838.8L1275.8 873.2z"/>
<path class="kk" d="M1266.2 868.1L1212.6 843.9M1275.8 868.1L1352.0 833.7"/>
<path class="w" d="M1266.2 859.0L1270.5 857.1L1216.9 832.9L1212.6 834.8zM1266.2 859.0L1212.6 834.8L1212.6 839.9L1266.2 864.1zM1266.2 859.0L1270.5 857.1L1270.5 862.2L1266.2 864.1z"/>
<path class="w" d="M1275.8 859.0L1352.0 824.6L1347.7 822.7L1271.5 857.1zM1275.8 859.0L1271.5 857.1L1271.5 862.2L1275.8 864.1zM1275.8 859.0L1352.0 824.6L1352.0 829.7L1275.8 864.1z"/>
<path class="kk" d="M1266.2 859.0L1212.6 834.8M1275.8 859.0L1352.0 824.6M1271.0 858.8L1271.0 866.1M1271.0 867.9L1271.0 875.2"/>
<path class="k" d="M1267.6 860.8L1271.0 858.8L1274.4 860.8M1267.6 866.7L1271.0 864.9L1274.4 866.7M1267.6 869.9L1271.0 867.9L1274.4 869.9M1267.6 875.8L1271.0 874.0L1274.4 875.8"/>
<path class="w" d="M1266.2 962.5L1270.5 960.6L1216.9 936.4L1212.6 938.3zM1266.2 962.5L1212.6 938.3L1212.6 943.4L1266.2 967.6zM1266.2 962.5L1270.5 960.6L1270.5 965.7L1266.2 967.6z"/>
<path class="w" d="M1275.8 962.5L1352.0 928.1L1347.7 926.2L1271.5 960.6zM1275.8 962.5L1271.5 960.6L1271.5 965.7L1275.8 967.6zM1275.8 962.5L1352.0 928.1L1352.0 933.2L1275.8 967.6z"/>
<path class="kk" d="M1266.2 962.5L1212.6 938.3M1275.8 962.5L1352.0 928.1"/>
<path class="w" d="M1266.2 953.4L1270.5 951.5L1216.9 927.3L1212.6 929.2zM1266.2 953.4L1212.6 929.2L1212.6 934.3L1266.2 958.5zM1266.2 953.4L1270.5 951.5L1270.5 956.6L1266.2 958.5z"/>
<path class="w" d="M1275.8 953.4L1352.0 919.0L1347.7 917.1L1271.5 951.5zM1275.8 953.4L1271.5 951.5L1271.5 956.6L1275.8 958.5zM1275.8 953.4L1352.0 919.0L1352.0 924.1L1275.8 958.5z"/>
<path class="kk" d="M1266.2 953.4L1212.6 929.2M1275.8 953.4L1352.0 919.0M1271.0 953.2L1271.0 960.5M1271.0 962.3L1271.0 969.6"/>
<path class="k" d="M1267.6 955.2L1271.0 953.2L1274.4 955.2M1267.6 961.1L1271.0 959.3L1274.4 961.1M1267.6 964.3L1271.0 962.3L1274.4 964.3M1267.6 970.2L1271.0 968.4L1274.4 970.2"/>
<path class="w" d="M1266.2 1050.5L1270.5 1048.6L1216.9 1024.4L1212.6 1026.3zM1266.2 1050.5L1212.6 1026.3L1212.6 1031.4L1266.2 1055.6zM1266.2 1050.5L1270.5 1048.6L1270.5 1053.7L1266.2 1055.6z"/>
<path class="w" d="M1275.8 1050.5L1352.0 1016.1L1347.7 1014.2L1271.5 1048.6zM1275.8 1050.5L1271.5 1048.6L1271.5 1053.7L1275.8 1055.6zM1275.8 1050.5L1352.0 1016.1L1352.0 1021.2L1275.8 1055.6z"/>
<path class="kk" d="M1266.2 1050.5L1212.6 1026.3M1275.8 1050.5L1352.0 1016.1"/>
<path class="w" d="M1266.2 1041.4L1270.5 1039.5L1216.9 1015.3L1212.6 1017.2zM1266.2 1041.4L1212.6 1017.2L1212.6 1022.3L1266.2 1046.5zM1266.2 1041.4L1270.5 1039.5L1270.5 1044.6L1266.2 1046.5z"/>
<path class="w" d="M1275.8 1041.4L1352.0 1007.0L1347.7 1005.1L1271.5 1039.5zM1275.8 1041.4L1271.5 1039.5L1271.5 1044.6L1275.8 1046.5zM1275.8 1041.4L1352.0 1007.0L1352.0 1012.1L1275.8 1046.5z"/>
<path class="kk" d="M1266.2 1041.4L1212.6 1017.2M1275.8 1041.4L1352.0 1007.0M1271.0 1041.2L1271.0 1048.5M1271.0 1050.3L1271.0 1057.6"/>
<path class="k" d="M1267.6 1043.2L1271.0 1041.2L1274.4 1043.2M1267.6 1049.1L1271.0 1047.3L1274.4 1049.1M1267.6 1052.3L1271.0 1050.3L1274.4 1052.3M1267.6 1058.2L1271.0 1056.4L1274.4 1058.2"/>
<rect class="lb" x="1268.5" y="705.3" width="19" height="5.2"/><path class="lt" d="M1269.7 707.9H1286.3"/>
<path class="gy" d="M1287.5 709.5L1307.0 734.0"/>
<rect class="wf" x="1053.5" y="603.9" width="174.29999999999995" height="38.0"/>
<path class="k" d="M1053.5 603.9L1227.8 603.9L1227.8 641.9L1053.5 641.9z"/>
<path class="gr" d="M1053.5 604.8L1227.8 604.8M1181.4 618.4L1181.4 641.9M1204.9 618.4L1204.9 641.9M1110.1 618.4L1110.1 632.2M1133.5 618.4L1133.5 632.2"/>
<path class="k1" d="M1053.5 608.5L1227.8 608.5M1053.5 613.4L1227.8 613.4M1053.5 618.4L1227.8 618.4M1053.5 632.2L1227.8 632.2M1053.5 637.2L1227.8 637.2M1053.5 614.4L1227.8 614.4M1053.5 633.2L1227.8 633.2M1077.2 608.5L1077.2 613.4M1077.2 618.4L1077.2 632.2M1109.1 608.5L1109.1 613.4M1109.1 618.4L1109.1 632.2M1132.5 608.5L1132.5 613.4M1132.5 618.4L1132.5 632.2M1156.5 608.5L1156.5 613.4M1156.5 618.4L1156.5 632.2M1180.4 608.5L1180.4 613.4M1180.4 618.4L1180.4 632.2M1203.9 608.5L1203.9 613.4M1203.9 618.4L1203.9 632.2M1156.5 632.2L1156.5 641.9M1180.4 632.2L1180.4 641.9M1203.9 632.2L1203.9 641.9"/>
<text x="1055.0" y="607.6" font-size="3.600" fill="#8a8a8a" text-anchor="start">Malzeme Listesi</text>
<text x="1055.0" y="612.5" font-size="3.600" fill="#8a8a8a" text-anchor="start">Poz</text>
<text x="1078.7" y="612.5" font-size="3.600" fill="#8a8a8a" text-anchor="start">Malzeme</text>
<text x="1110.6" y="612.5" font-size="3.600" fill="#8a8a8a" text-anchor="start">Nitelik</text>
<text x="1134.0" y="612.5" font-size="3.600" fill="#8a8a8a" text-anchor="start">Adet</text>
<text x="1158.0" y="612.5" font-size="3.600" fill="#8a8a8a" text-anchor="start">Uzunluk</text>
<text x="1181.9" y="612.5" font-size="3.600" fill="#8a8a8a" text-anchor="start">Alan</text>
<text x="1205.4" y="612.5" font-size="3.600" fill="#8a8a8a" text-anchor="start">Ağırlık</text>
<text x="1056.5" y="617.5" font-size="3.600" fill="#8a8a8a" text-anchor="start">Çizim No</text>
<text x="1055.0" y="622.5" font-size="3.600" fill="#8a8a8a" text-anchor="start">P1</text>
<text x="1078.7" y="622.5" font-size="3.600" fill="#8a8a8a" text-anchor="start">H20</text>
<text x="1110.6" y="622.5" font-size="3.600" fill="#8a8a8a" text-anchor="start">S235</text>
<text x="1134.0" y="622.5" font-size="3.600" fill="#8a8a8a" text-anchor="start">12</text>
<text x="1178.9" y="622.5" font-size="3.600" fill="#8a8a8a" text-anchor="end">3000</text>
<text x="1202.4" y="622.5" font-size="3.600" fill="#8a8a8a" text-anchor="end">2.16</text>
<text x="1226.3" y="622.5" font-size="3.600" fill="#8a8a8a" text-anchor="end">226.8</text>
<text x="1055.0" y="626.9" font-size="3.600" fill="#8a8a8a" text-anchor="start">N1</text>
<text x="1078.7" y="626.9" font-size="3.600" fill="#8a8a8a" text-anchor="start">ULP100</text>
<text x="1110.6" y="626.9" font-size="3.600" fill="#8a8a8a" text-anchor="start">S235</text>
<text x="1134.0" y="626.9" font-size="3.600" fill="#8a8a8a" text-anchor="start">8</text>
<text x="1178.9" y="626.9" font-size="3.600" fill="#8a8a8a" text-anchor="end">950</text>
<text x="1202.4" y="626.9" font-size="3.600" fill="#8a8a8a" text-anchor="end">5.31</text>
<text x="1226.3" y="626.9" font-size="3.600" fill="#8a8a8a" text-anchor="end">10.5</text>
<text x="1055.0" y="631.3" font-size="3.600" fill="#8a8a8a" text-anchor="start">D2</text>
<text x="1078.7" y="631.3" font-size="3.600" fill="#8a8a8a" text-anchor="start">ULP100</text>
<text x="1110.6" y="631.3" font-size="3.600" fill="#8a8a8a" text-anchor="start">S235</text>
<text x="1134.0" y="631.3" font-size="3.600" fill="#8a8a8a" text-anchor="start">8</text>
<text x="1178.9" y="631.3" font-size="3.600" fill="#8a8a8a" text-anchor="end">1150</text>
<text x="1202.4" y="631.3" font-size="3.600" fill="#8a8a8a" text-anchor="end">6.44</text>
<text x="1226.3" y="631.3" font-size="3.600" fill="#8a8a8a" text-anchor="end">12.1</text>
<text x="1155.0" y="636.3" font-size="3.600" fill="#8a8a8a" text-anchor="end">Toplam</text>
<text x="1155.0" y="641.0" font-size="3.600" fill="#8a8a8a" text-anchor="end">Genel Toplam</text>
<text x="1178.9" y="636.3" font-size="3.600" fill="#8a8a8a" text-anchor="end">4800 mm</text>
<text x="1202.4" y="636.3" font-size="3.600" fill="#8a8a8a" text-anchor="end">13.91 m²</text>
<text x="1226.3" y="636.3" font-size="3.600" fill="#8a8a8a" text-anchor="end">249.4 kg</text>
<text x="1178.9" y="641.0" font-size="3.600" fill="#8a8a8a" text-anchor="end">4800 mm</text>
<text x="1202.4" y="641.0" font-size="3.600" fill="#8a8a8a" text-anchor="end">13.91 m²</text>
<text x="1226.3" y="641.0" font-size="3.600" fill="#8a8a8a" text-anchor="end">249.4 kg</text></svg>
</div>
<div class="abs" style="left:1074px;top:186px;width:79px;height:40px;background:rgba(58,58,58,0.97)"></div>
<svg class="ico" style="left:1074px;top:186px" width="79" height="40" viewBox="1074 186 79 40">
<path d="M1082 196.300V218.200H1102.100V212" fill="none" stroke="#d8d8d8" stroke-width="3.900"/><path d="M1082 207.900H1093.800" stroke="#d8d8d8" stroke-width="3.800"/>
<rect x="1086.800" y="196.800" width="6.400" height="6.400" fill="none" stroke="#e4e4e4" stroke-width="1.800"/><rect x="1088" y="198" width="1.800" height="3.600" fill="#1c1c1c"/>
<rect x="1097.200" y="193.200" width="11.600" height="16" fill="none" stroke="#e4e4e4" stroke-width="2.200"/>
<circle cx="1132" cy="201" r="8" fill="none" stroke="#e4e4e4" stroke-width="1.900"/><path d="M1138 207l8 8" stroke="#d0d0d0" stroke-width="3"/>
<text x="1116.500" y="220.300" font-family="Liberation Sans" font-size="11" font-weight="bold" fill="#5b93dc">100</text>
</svg>
</body>
</html>
